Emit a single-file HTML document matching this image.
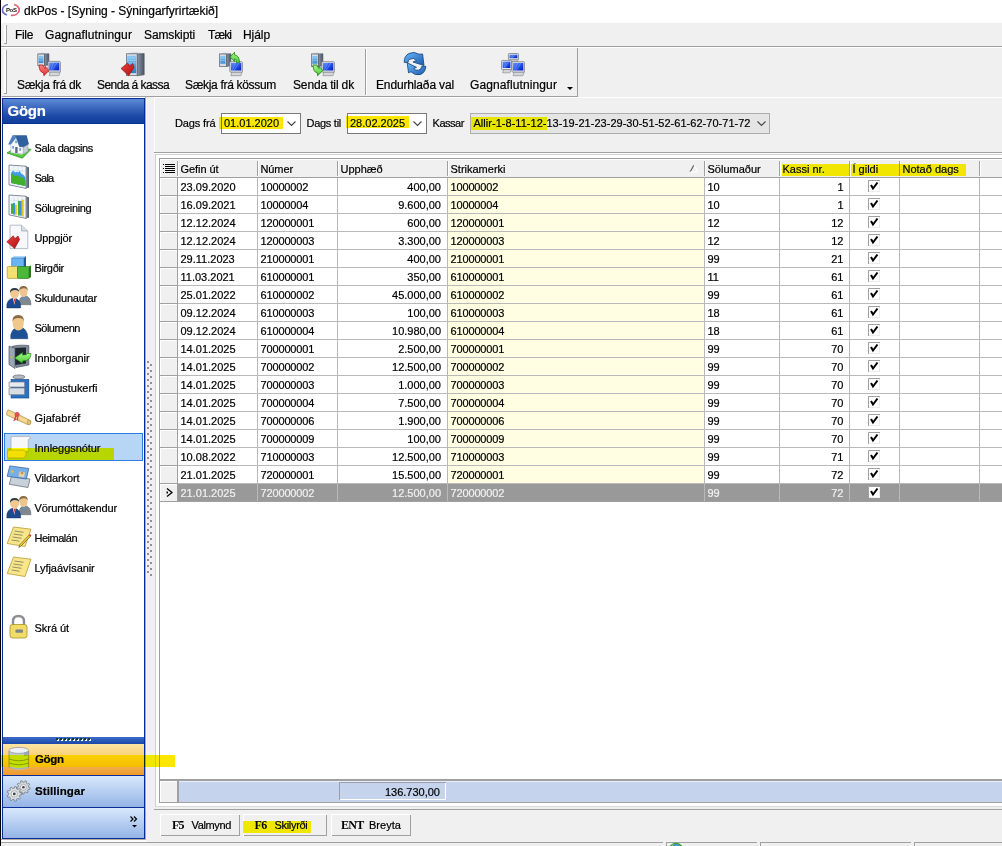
<!DOCTYPE html>
<html><head><meta charset="utf-8"><title>dkPos</title>
<style>
html,body{margin:0;padding:0;}
body{width:1002px;height:846px;position:relative;overflow:hidden;background:#f0f0f0;font-family:"Liberation Sans", sans-serif;}
body>div,body>svg{position:absolute;}
.t{white-space:pre;line-height:1;-webkit-text-stroke:0.2px currentColor;}
</style></head><body>
<div style="left:0px;top:0px;width:1002px;height:23px;background:#fff"></div>
<div style="left:0px;top:0px;width:1px;height:846px;background:#000"></div>
<div style="left:1px;top:23px;width:1001px;height:23px;background:#f0f0f0"></div>
<div style="left:4px;top:25px;width:2px;height:18px;background:#fff"></div>
<div style="left:6px;top:25px;width:1px;height:19px;background:#a0a0a0"></div>
<div style="left:4px;top:43px;width:3px;height:1px;background:#a0a0a0"></div>
<div style="left:1px;top:46px;width:1001px;height:1px;background:#a0a0a0"></div>
<div style="left:1px;top:47px;width:1001px;height:1px;background:#fff"></div>
<div style="left:1px;top:48px;width:1001px;height:49px;background:#f0f0f0"></div>
<div style="left:2px;top:96px;width:576px;height:1px;background:#a0a0a0"></div>
<div style="left:577px;top:48px;width:1px;height:49px;background:#a0a0a0"></div>
<div style="left:1px;top:97px;width:144px;height:1px;background:#fff"></div>
<div style="left:154px;top:97px;width:848px;height:1px;background:#fff"></div>
<div style="left:4px;top:50px;width:2px;height:43px;background:#fff"></div>
<div style="left:6px;top:50px;width:1px;height:44px;background:#a0a0a0"></div>
<div style="left:4px;top:93px;width:3px;height:1px;background:#a0a0a0"></div>
<div style="left:365px;top:49px;width:1px;height:46px;background:#a0a0a0"></div>
<div style="left:366px;top:49px;width:1px;height:46px;background:#fff"></div>
<div style="left:2px;top:98px;width:143px;height:741px;background:#0a2c96"></div>
<div style="left:3px;top:99px;width:141px;height:24px;background:linear-gradient(#5d8ad6,#1d4aa6 70%,#0f3d9c)"></div>
<div style="left:3px;top:123px;width:141px;height:1px;background:#073090"></div>
<div style="left:3px;top:124px;width:141px;height:613px;background:#fff"></div>
<div style="left:145px;top:96px;width:1px;height:743px;background:#aca89c"></div>
<div style="left:146px;top:98px;width:1px;height:741px;background:#f8f8f8"></div>
<div style="left:4px;top:433px;width:139px;height:28px;background:#b7d6f6;box-shadow:inset 0 0 0 1px #2a7fe0"></div>
<div style="left:3px;top:737px;width:141px;height:7px;background:linear-gradient(#3a6cc8,#1a48a8)"></div>
<div style="left:57px;top:739px;width:2px;height:2px;background:#fff"></div>
<div style="left:56px;top:738px;width:2px;height:2px;background:#1a3a2a"></div>
<div style="left:61px;top:739px;width:2px;height:2px;background:#fff"></div>
<div style="left:60px;top:738px;width:2px;height:2px;background:#1a3a2a"></div>
<div style="left:65px;top:739px;width:2px;height:2px;background:#fff"></div>
<div style="left:64px;top:738px;width:2px;height:2px;background:#1a3a2a"></div>
<div style="left:69px;top:739px;width:2px;height:2px;background:#fff"></div>
<div style="left:68px;top:738px;width:2px;height:2px;background:#1a3a2a"></div>
<div style="left:73px;top:739px;width:2px;height:2px;background:#fff"></div>
<div style="left:72px;top:738px;width:2px;height:2px;background:#1a3a2a"></div>
<div style="left:77px;top:739px;width:2px;height:2px;background:#fff"></div>
<div style="left:76px;top:738px;width:2px;height:2px;background:#1a3a2a"></div>
<div style="left:81px;top:739px;width:2px;height:2px;background:#fff"></div>
<div style="left:80px;top:738px;width:2px;height:2px;background:#1a3a2a"></div>
<div style="left:85px;top:739px;width:2px;height:2px;background:#fff"></div>
<div style="left:84px;top:738px;width:2px;height:2px;background:#1a3a2a"></div>
<div style="left:89px;top:739px;width:2px;height:2px;background:#fff"></div>
<div style="left:88px;top:738px;width:2px;height:2px;background:#1a3a2a"></div>
<div style="left:3px;top:744px;width:141px;height:31px;background:linear-gradient(#fde6a4,#f9d27a 35%,#f8d040 36%,#f4bc30 74%,#f0ac48 75%,#ef9a2c)"></div>
<div style="left:3px;top:775px;width:141px;height:1px;background:#0a2c96"></div>
<div style="left:3px;top:776px;width:141px;height:31px;background:linear-gradient(#d8e8fc,#94b4e6)"></div>
<div style="left:3px;top:807px;width:141px;height:1px;background:#0a2c96"></div>
<div style="left:3px;top:808px;width:141px;height:30px;background:linear-gradient(#d8e8fc,#94b4e6)"></div>
<div style="left:1px;top:839px;width:145px;height:1px;background:#b4ac9c"></div>
<div style="left:1px;top:840px;width:145px;height:2px;background:#fafafa"></div>
<div style="left:154px;top:98px;width:1px;height:54px;background:#fff"></div>
<div style="left:154px;top:152px;width:848px;height:1px;background:#a0a0a0"></div>
<div style="left:155px;top:153px;width:847px;height:1px;background:#fff"></div>
<div style="left:221px;top:113px;width:80px;height:21px;background:#fff;box-shadow:inset 0 0 0 1px #7a7a7a"></div>
<div style="left:347px;top:113px;width:80px;height:21px;background:#fff;box-shadow:inset 0 0 0 1px #7a7a7a"></div>
<div style="left:470px;top:113px;width:300px;height:21px;background:#e5e5e5;box-shadow:inset 0 0 0 1px #adadad"></div>
<div style="left:155px;top:154px;width:847px;height:1px;#d8d8d8"></div>
<div style="left:155px;top:154px;width:847px;height:652px;background:#fff;box-shadow:inset 1px 1px 0 #d0d0d0"></div>
<div style="left:159px;top:158px;width:843px;height:644px;background:#fff;box-shadow:inset 1px 1px 0 #a0a0a0"></div>
<div style="left:161px;top:160px;width:841px;height:17px;background:#f0f0f0"></div>
<div style="left:160px;top:177px;width:842px;height:1px;background:#a0a0a0"></div>
<div style="left:177px;top:161px;width:1px;height:15px;background:#a0a0a0"></div>
<div style="left:178px;top:161px;width:1px;height:15px;background:#fff"></div>
<div style="left:257px;top:161px;width:1px;height:15px;background:#a0a0a0"></div>
<div style="left:258px;top:161px;width:1px;height:15px;background:#fff"></div>
<div style="left:337px;top:161px;width:1px;height:15px;background:#a0a0a0"></div>
<div style="left:338px;top:161px;width:1px;height:15px;background:#fff"></div>
<div style="left:447px;top:161px;width:1px;height:15px;background:#a0a0a0"></div>
<div style="left:448px;top:161px;width:1px;height:15px;background:#fff"></div>
<div style="left:704px;top:161px;width:1px;height:15px;background:#a0a0a0"></div>
<div style="left:705px;top:161px;width:1px;height:15px;background:#fff"></div>
<div style="left:779px;top:161px;width:1px;height:15px;background:#a0a0a0"></div>
<div style="left:780px;top:161px;width:1px;height:15px;background:#fff"></div>
<div style="left:849px;top:161px;width:1px;height:15px;background:#a0a0a0"></div>
<div style="left:850px;top:161px;width:1px;height:15px;background:#fff"></div>
<div style="left:899px;top:161px;width:1px;height:15px;background:#a0a0a0"></div>
<div style="left:900px;top:161px;width:1px;height:15px;background:#fff"></div>
<div style="left:979px;top:161px;width:1px;height:15px;background:#a0a0a0"></div>
<div style="left:980px;top:161px;width:1px;height:15px;background:#fff"></div>
<div style="left:165px;top:164px;width:10px;height:1px;background:#000"></div>
<div style="left:165px;top:166px;width:10px;height:1px;background:#000"></div>
<div style="left:165px;top:168px;width:10px;height:1px;background:#000"></div>
<div style="left:165px;top:170px;width:10px;height:1px;background:#000"></div>
<div style="left:165px;top:172px;width:10px;height:1px;background:#000"></div>
<div style="left:163px;top:164px;width:1px;height:1px;background:#000"></div>
<div style="left:163px;top:168px;width:1px;height:1px;background:#000"></div>
<div style="left:163px;top:172px;width:1px;height:1px;background:#000"></div>
<div style="left:160px;top:178px;width:17px;height:17px;background:#f0f0f0;box-shadow:inset 1px 1px 0 #fff"></div>
<div style="left:177px;top:178px;width:1px;height:17px;background:#a0a0a0"></div>
<div style="left:448px;top:178px;width:256px;height:17px;background:#fffee2"></div>
<div style="left:160px;top:195px;width:842px;height:1px;background:#b9b9b9"></div>
<div style="left:160px;top:195px;width:18px;height:1px;background:#a0a0a0"></div>
<div style="left:257px;top:178px;width:1px;height:17px;background:#b9b9b9"></div>
<div style="left:337px;top:178px;width:1px;height:17px;background:#b9b9b9"></div>
<div style="left:447px;top:178px;width:1px;height:17px;background:#b9b9b9"></div>
<div style="left:704px;top:178px;width:1px;height:17px;background:#b9b9b9"></div>
<div style="left:779px;top:178px;width:1px;height:17px;background:#b9b9b9"></div>
<div style="left:849px;top:178px;width:1px;height:17px;background:#b9b9b9"></div>
<div style="left:899px;top:178px;width:1px;height:17px;background:#b9b9b9"></div>
<div style="left:979px;top:178px;width:1px;height:17px;background:#b9b9b9"></div>
<div style="left:160px;top:196px;width:17px;height:17px;background:#f0f0f0;box-shadow:inset 1px 1px 0 #fff"></div>
<div style="left:177px;top:196px;width:1px;height:17px;background:#a0a0a0"></div>
<div style="left:448px;top:196px;width:256px;height:17px;background:#fffee2"></div>
<div style="left:160px;top:213px;width:842px;height:1px;background:#b9b9b9"></div>
<div style="left:160px;top:213px;width:18px;height:1px;background:#a0a0a0"></div>
<div style="left:257px;top:196px;width:1px;height:17px;background:#b9b9b9"></div>
<div style="left:337px;top:196px;width:1px;height:17px;background:#b9b9b9"></div>
<div style="left:447px;top:196px;width:1px;height:17px;background:#b9b9b9"></div>
<div style="left:704px;top:196px;width:1px;height:17px;background:#b9b9b9"></div>
<div style="left:779px;top:196px;width:1px;height:17px;background:#b9b9b9"></div>
<div style="left:849px;top:196px;width:1px;height:17px;background:#b9b9b9"></div>
<div style="left:899px;top:196px;width:1px;height:17px;background:#b9b9b9"></div>
<div style="left:979px;top:196px;width:1px;height:17px;background:#b9b9b9"></div>
<div style="left:160px;top:214px;width:17px;height:17px;background:#f0f0f0;box-shadow:inset 1px 1px 0 #fff"></div>
<div style="left:177px;top:214px;width:1px;height:17px;background:#a0a0a0"></div>
<div style="left:448px;top:214px;width:256px;height:17px;background:#fffee2"></div>
<div style="left:160px;top:231px;width:842px;height:1px;background:#b9b9b9"></div>
<div style="left:160px;top:231px;width:18px;height:1px;background:#a0a0a0"></div>
<div style="left:257px;top:214px;width:1px;height:17px;background:#b9b9b9"></div>
<div style="left:337px;top:214px;width:1px;height:17px;background:#b9b9b9"></div>
<div style="left:447px;top:214px;width:1px;height:17px;background:#b9b9b9"></div>
<div style="left:704px;top:214px;width:1px;height:17px;background:#b9b9b9"></div>
<div style="left:779px;top:214px;width:1px;height:17px;background:#b9b9b9"></div>
<div style="left:849px;top:214px;width:1px;height:17px;background:#b9b9b9"></div>
<div style="left:899px;top:214px;width:1px;height:17px;background:#b9b9b9"></div>
<div style="left:979px;top:214px;width:1px;height:17px;background:#b9b9b9"></div>
<div style="left:160px;top:232px;width:17px;height:17px;background:#f0f0f0;box-shadow:inset 1px 1px 0 #fff"></div>
<div style="left:177px;top:232px;width:1px;height:17px;background:#a0a0a0"></div>
<div style="left:448px;top:232px;width:256px;height:17px;background:#fffee2"></div>
<div style="left:160px;top:249px;width:842px;height:1px;background:#b9b9b9"></div>
<div style="left:160px;top:249px;width:18px;height:1px;background:#a0a0a0"></div>
<div style="left:257px;top:232px;width:1px;height:17px;background:#b9b9b9"></div>
<div style="left:337px;top:232px;width:1px;height:17px;background:#b9b9b9"></div>
<div style="left:447px;top:232px;width:1px;height:17px;background:#b9b9b9"></div>
<div style="left:704px;top:232px;width:1px;height:17px;background:#b9b9b9"></div>
<div style="left:779px;top:232px;width:1px;height:17px;background:#b9b9b9"></div>
<div style="left:849px;top:232px;width:1px;height:17px;background:#b9b9b9"></div>
<div style="left:899px;top:232px;width:1px;height:17px;background:#b9b9b9"></div>
<div style="left:979px;top:232px;width:1px;height:17px;background:#b9b9b9"></div>
<div style="left:160px;top:250px;width:17px;height:17px;background:#f0f0f0;box-shadow:inset 1px 1px 0 #fff"></div>
<div style="left:177px;top:250px;width:1px;height:17px;background:#a0a0a0"></div>
<div style="left:448px;top:250px;width:256px;height:17px;background:#fffee2"></div>
<div style="left:160px;top:267px;width:842px;height:1px;background:#b9b9b9"></div>
<div style="left:160px;top:267px;width:18px;height:1px;background:#a0a0a0"></div>
<div style="left:257px;top:250px;width:1px;height:17px;background:#b9b9b9"></div>
<div style="left:337px;top:250px;width:1px;height:17px;background:#b9b9b9"></div>
<div style="left:447px;top:250px;width:1px;height:17px;background:#b9b9b9"></div>
<div style="left:704px;top:250px;width:1px;height:17px;background:#b9b9b9"></div>
<div style="left:779px;top:250px;width:1px;height:17px;background:#b9b9b9"></div>
<div style="left:849px;top:250px;width:1px;height:17px;background:#b9b9b9"></div>
<div style="left:899px;top:250px;width:1px;height:17px;background:#b9b9b9"></div>
<div style="left:979px;top:250px;width:1px;height:17px;background:#b9b9b9"></div>
<div style="left:160px;top:268px;width:17px;height:17px;background:#f0f0f0;box-shadow:inset 1px 1px 0 #fff"></div>
<div style="left:177px;top:268px;width:1px;height:17px;background:#a0a0a0"></div>
<div style="left:448px;top:268px;width:256px;height:17px;background:#fffee2"></div>
<div style="left:160px;top:285px;width:842px;height:1px;background:#b9b9b9"></div>
<div style="left:160px;top:285px;width:18px;height:1px;background:#a0a0a0"></div>
<div style="left:257px;top:268px;width:1px;height:17px;background:#b9b9b9"></div>
<div style="left:337px;top:268px;width:1px;height:17px;background:#b9b9b9"></div>
<div style="left:447px;top:268px;width:1px;height:17px;background:#b9b9b9"></div>
<div style="left:704px;top:268px;width:1px;height:17px;background:#b9b9b9"></div>
<div style="left:779px;top:268px;width:1px;height:17px;background:#b9b9b9"></div>
<div style="left:849px;top:268px;width:1px;height:17px;background:#b9b9b9"></div>
<div style="left:899px;top:268px;width:1px;height:17px;background:#b9b9b9"></div>
<div style="left:979px;top:268px;width:1px;height:17px;background:#b9b9b9"></div>
<div style="left:160px;top:286px;width:17px;height:17px;background:#f0f0f0;box-shadow:inset 1px 1px 0 #fff"></div>
<div style="left:177px;top:286px;width:1px;height:17px;background:#a0a0a0"></div>
<div style="left:448px;top:286px;width:256px;height:17px;background:#fffee2"></div>
<div style="left:160px;top:303px;width:842px;height:1px;background:#b9b9b9"></div>
<div style="left:160px;top:303px;width:18px;height:1px;background:#a0a0a0"></div>
<div style="left:257px;top:286px;width:1px;height:17px;background:#b9b9b9"></div>
<div style="left:337px;top:286px;width:1px;height:17px;background:#b9b9b9"></div>
<div style="left:447px;top:286px;width:1px;height:17px;background:#b9b9b9"></div>
<div style="left:704px;top:286px;width:1px;height:17px;background:#b9b9b9"></div>
<div style="left:779px;top:286px;width:1px;height:17px;background:#b9b9b9"></div>
<div style="left:849px;top:286px;width:1px;height:17px;background:#b9b9b9"></div>
<div style="left:899px;top:286px;width:1px;height:17px;background:#b9b9b9"></div>
<div style="left:979px;top:286px;width:1px;height:17px;background:#b9b9b9"></div>
<div style="left:160px;top:304px;width:17px;height:17px;background:#f0f0f0;box-shadow:inset 1px 1px 0 #fff"></div>
<div style="left:177px;top:304px;width:1px;height:17px;background:#a0a0a0"></div>
<div style="left:448px;top:304px;width:256px;height:17px;background:#fffee2"></div>
<div style="left:160px;top:321px;width:842px;height:1px;background:#b9b9b9"></div>
<div style="left:160px;top:321px;width:18px;height:1px;background:#a0a0a0"></div>
<div style="left:257px;top:304px;width:1px;height:17px;background:#b9b9b9"></div>
<div style="left:337px;top:304px;width:1px;height:17px;background:#b9b9b9"></div>
<div style="left:447px;top:304px;width:1px;height:17px;background:#b9b9b9"></div>
<div style="left:704px;top:304px;width:1px;height:17px;background:#b9b9b9"></div>
<div style="left:779px;top:304px;width:1px;height:17px;background:#b9b9b9"></div>
<div style="left:849px;top:304px;width:1px;height:17px;background:#b9b9b9"></div>
<div style="left:899px;top:304px;width:1px;height:17px;background:#b9b9b9"></div>
<div style="left:979px;top:304px;width:1px;height:17px;background:#b9b9b9"></div>
<div style="left:160px;top:322px;width:17px;height:17px;background:#f0f0f0;box-shadow:inset 1px 1px 0 #fff"></div>
<div style="left:177px;top:322px;width:1px;height:17px;background:#a0a0a0"></div>
<div style="left:448px;top:322px;width:256px;height:17px;background:#fffee2"></div>
<div style="left:160px;top:339px;width:842px;height:1px;background:#b9b9b9"></div>
<div style="left:160px;top:339px;width:18px;height:1px;background:#a0a0a0"></div>
<div style="left:257px;top:322px;width:1px;height:17px;background:#b9b9b9"></div>
<div style="left:337px;top:322px;width:1px;height:17px;background:#b9b9b9"></div>
<div style="left:447px;top:322px;width:1px;height:17px;background:#b9b9b9"></div>
<div style="left:704px;top:322px;width:1px;height:17px;background:#b9b9b9"></div>
<div style="left:779px;top:322px;width:1px;height:17px;background:#b9b9b9"></div>
<div style="left:849px;top:322px;width:1px;height:17px;background:#b9b9b9"></div>
<div style="left:899px;top:322px;width:1px;height:17px;background:#b9b9b9"></div>
<div style="left:979px;top:322px;width:1px;height:17px;background:#b9b9b9"></div>
<div style="left:160px;top:340px;width:17px;height:17px;background:#f0f0f0;box-shadow:inset 1px 1px 0 #fff"></div>
<div style="left:177px;top:340px;width:1px;height:17px;background:#a0a0a0"></div>
<div style="left:448px;top:340px;width:256px;height:17px;background:#fffee2"></div>
<div style="left:160px;top:357px;width:842px;height:1px;background:#b9b9b9"></div>
<div style="left:160px;top:357px;width:18px;height:1px;background:#a0a0a0"></div>
<div style="left:257px;top:340px;width:1px;height:17px;background:#b9b9b9"></div>
<div style="left:337px;top:340px;width:1px;height:17px;background:#b9b9b9"></div>
<div style="left:447px;top:340px;width:1px;height:17px;background:#b9b9b9"></div>
<div style="left:704px;top:340px;width:1px;height:17px;background:#b9b9b9"></div>
<div style="left:779px;top:340px;width:1px;height:17px;background:#b9b9b9"></div>
<div style="left:849px;top:340px;width:1px;height:17px;background:#b9b9b9"></div>
<div style="left:899px;top:340px;width:1px;height:17px;background:#b9b9b9"></div>
<div style="left:979px;top:340px;width:1px;height:17px;background:#b9b9b9"></div>
<div style="left:160px;top:358px;width:17px;height:17px;background:#f0f0f0;box-shadow:inset 1px 1px 0 #fff"></div>
<div style="left:177px;top:358px;width:1px;height:17px;background:#a0a0a0"></div>
<div style="left:448px;top:358px;width:256px;height:17px;background:#fffee2"></div>
<div style="left:160px;top:375px;width:842px;height:1px;background:#b9b9b9"></div>
<div style="left:160px;top:375px;width:18px;height:1px;background:#a0a0a0"></div>
<div style="left:257px;top:358px;width:1px;height:17px;background:#b9b9b9"></div>
<div style="left:337px;top:358px;width:1px;height:17px;background:#b9b9b9"></div>
<div style="left:447px;top:358px;width:1px;height:17px;background:#b9b9b9"></div>
<div style="left:704px;top:358px;width:1px;height:17px;background:#b9b9b9"></div>
<div style="left:779px;top:358px;width:1px;height:17px;background:#b9b9b9"></div>
<div style="left:849px;top:358px;width:1px;height:17px;background:#b9b9b9"></div>
<div style="left:899px;top:358px;width:1px;height:17px;background:#b9b9b9"></div>
<div style="left:979px;top:358px;width:1px;height:17px;background:#b9b9b9"></div>
<div style="left:160px;top:376px;width:17px;height:17px;background:#f0f0f0;box-shadow:inset 1px 1px 0 #fff"></div>
<div style="left:177px;top:376px;width:1px;height:17px;background:#a0a0a0"></div>
<div style="left:448px;top:376px;width:256px;height:17px;background:#fffee2"></div>
<div style="left:160px;top:393px;width:842px;height:1px;background:#b9b9b9"></div>
<div style="left:160px;top:393px;width:18px;height:1px;background:#a0a0a0"></div>
<div style="left:257px;top:376px;width:1px;height:17px;background:#b9b9b9"></div>
<div style="left:337px;top:376px;width:1px;height:17px;background:#b9b9b9"></div>
<div style="left:447px;top:376px;width:1px;height:17px;background:#b9b9b9"></div>
<div style="left:704px;top:376px;width:1px;height:17px;background:#b9b9b9"></div>
<div style="left:779px;top:376px;width:1px;height:17px;background:#b9b9b9"></div>
<div style="left:849px;top:376px;width:1px;height:17px;background:#b9b9b9"></div>
<div style="left:899px;top:376px;width:1px;height:17px;background:#b9b9b9"></div>
<div style="left:979px;top:376px;width:1px;height:17px;background:#b9b9b9"></div>
<div style="left:160px;top:394px;width:17px;height:17px;background:#f0f0f0;box-shadow:inset 1px 1px 0 #fff"></div>
<div style="left:177px;top:394px;width:1px;height:17px;background:#a0a0a0"></div>
<div style="left:448px;top:394px;width:256px;height:17px;background:#fffee2"></div>
<div style="left:160px;top:411px;width:842px;height:1px;background:#b9b9b9"></div>
<div style="left:160px;top:411px;width:18px;height:1px;background:#a0a0a0"></div>
<div style="left:257px;top:394px;width:1px;height:17px;background:#b9b9b9"></div>
<div style="left:337px;top:394px;width:1px;height:17px;background:#b9b9b9"></div>
<div style="left:447px;top:394px;width:1px;height:17px;background:#b9b9b9"></div>
<div style="left:704px;top:394px;width:1px;height:17px;background:#b9b9b9"></div>
<div style="left:779px;top:394px;width:1px;height:17px;background:#b9b9b9"></div>
<div style="left:849px;top:394px;width:1px;height:17px;background:#b9b9b9"></div>
<div style="left:899px;top:394px;width:1px;height:17px;background:#b9b9b9"></div>
<div style="left:979px;top:394px;width:1px;height:17px;background:#b9b9b9"></div>
<div style="left:160px;top:412px;width:17px;height:17px;background:#f0f0f0;box-shadow:inset 1px 1px 0 #fff"></div>
<div style="left:177px;top:412px;width:1px;height:17px;background:#a0a0a0"></div>
<div style="left:448px;top:412px;width:256px;height:17px;background:#fffee2"></div>
<div style="left:160px;top:429px;width:842px;height:1px;background:#b9b9b9"></div>
<div style="left:160px;top:429px;width:18px;height:1px;background:#a0a0a0"></div>
<div style="left:257px;top:412px;width:1px;height:17px;background:#b9b9b9"></div>
<div style="left:337px;top:412px;width:1px;height:17px;background:#b9b9b9"></div>
<div style="left:447px;top:412px;width:1px;height:17px;background:#b9b9b9"></div>
<div style="left:704px;top:412px;width:1px;height:17px;background:#b9b9b9"></div>
<div style="left:779px;top:412px;width:1px;height:17px;background:#b9b9b9"></div>
<div style="left:849px;top:412px;width:1px;height:17px;background:#b9b9b9"></div>
<div style="left:899px;top:412px;width:1px;height:17px;background:#b9b9b9"></div>
<div style="left:979px;top:412px;width:1px;height:17px;background:#b9b9b9"></div>
<div style="left:160px;top:430px;width:17px;height:17px;background:#f0f0f0;box-shadow:inset 1px 1px 0 #fff"></div>
<div style="left:177px;top:430px;width:1px;height:17px;background:#a0a0a0"></div>
<div style="left:448px;top:430px;width:256px;height:17px;background:#fffee2"></div>
<div style="left:160px;top:447px;width:842px;height:1px;background:#b9b9b9"></div>
<div style="left:160px;top:447px;width:18px;height:1px;background:#a0a0a0"></div>
<div style="left:257px;top:430px;width:1px;height:17px;background:#b9b9b9"></div>
<div style="left:337px;top:430px;width:1px;height:17px;background:#b9b9b9"></div>
<div style="left:447px;top:430px;width:1px;height:17px;background:#b9b9b9"></div>
<div style="left:704px;top:430px;width:1px;height:17px;background:#b9b9b9"></div>
<div style="left:779px;top:430px;width:1px;height:17px;background:#b9b9b9"></div>
<div style="left:849px;top:430px;width:1px;height:17px;background:#b9b9b9"></div>
<div style="left:899px;top:430px;width:1px;height:17px;background:#b9b9b9"></div>
<div style="left:979px;top:430px;width:1px;height:17px;background:#b9b9b9"></div>
<div style="left:160px;top:448px;width:17px;height:17px;background:#f0f0f0;box-shadow:inset 1px 1px 0 #fff"></div>
<div style="left:177px;top:448px;width:1px;height:17px;background:#a0a0a0"></div>
<div style="left:448px;top:448px;width:256px;height:17px;background:#fffee2"></div>
<div style="left:160px;top:465px;width:842px;height:1px;background:#b9b9b9"></div>
<div style="left:160px;top:465px;width:18px;height:1px;background:#a0a0a0"></div>
<div style="left:257px;top:448px;width:1px;height:17px;background:#b9b9b9"></div>
<div style="left:337px;top:448px;width:1px;height:17px;background:#b9b9b9"></div>
<div style="left:447px;top:448px;width:1px;height:17px;background:#b9b9b9"></div>
<div style="left:704px;top:448px;width:1px;height:17px;background:#b9b9b9"></div>
<div style="left:779px;top:448px;width:1px;height:17px;background:#b9b9b9"></div>
<div style="left:849px;top:448px;width:1px;height:17px;background:#b9b9b9"></div>
<div style="left:899px;top:448px;width:1px;height:17px;background:#b9b9b9"></div>
<div style="left:979px;top:448px;width:1px;height:17px;background:#b9b9b9"></div>
<div style="left:160px;top:466px;width:17px;height:17px;background:#f0f0f0;box-shadow:inset 1px 1px 0 #fff"></div>
<div style="left:177px;top:466px;width:1px;height:17px;background:#a0a0a0"></div>
<div style="left:448px;top:466px;width:256px;height:17px;background:#fffee2"></div>
<div style="left:160px;top:483px;width:842px;height:1px;background:#b9b9b9"></div>
<div style="left:160px;top:483px;width:18px;height:1px;background:#a0a0a0"></div>
<div style="left:257px;top:466px;width:1px;height:17px;background:#b9b9b9"></div>
<div style="left:337px;top:466px;width:1px;height:17px;background:#b9b9b9"></div>
<div style="left:447px;top:466px;width:1px;height:17px;background:#b9b9b9"></div>
<div style="left:704px;top:466px;width:1px;height:17px;background:#b9b9b9"></div>
<div style="left:779px;top:466px;width:1px;height:17px;background:#b9b9b9"></div>
<div style="left:849px;top:466px;width:1px;height:17px;background:#b9b9b9"></div>
<div style="left:899px;top:466px;width:1px;height:17px;background:#b9b9b9"></div>
<div style="left:979px;top:466px;width:1px;height:17px;background:#b9b9b9"></div>
<div style="left:160px;top:484px;width:17px;height:17px;background:#f0f0f0;box-shadow:inset 1px 1px 0 #fff"></div>
<div style="left:177px;top:484px;width:1px;height:17px;background:#a0a0a0"></div>
<div style="left:178px;top:484px;width:824px;height:17px;background:#999999"></div>
<div style="left:160px;top:501px;width:842px;height:1px;background:#a0a0a0"></div>
<div style="left:160px;top:501px;width:18px;height:1px;background:#a0a0a0"></div>
<div style="left:257px;top:484px;width:1px;height:17px;background:#b9b9b9"></div>
<div style="left:337px;top:484px;width:1px;height:17px;background:#b9b9b9"></div>
<div style="left:447px;top:484px;width:1px;height:17px;background:#b9b9b9"></div>
<div style="left:704px;top:484px;width:1px;height:17px;background:#b9b9b9"></div>
<div style="left:779px;top:484px;width:1px;height:17px;background:#b9b9b9"></div>
<div style="left:849px;top:484px;width:1px;height:17px;background:#b9b9b9"></div>
<div style="left:899px;top:484px;width:1px;height:17px;background:#b9b9b9"></div>
<div style="left:979px;top:484px;width:1px;height:17px;background:#b9b9b9"></div>
<div style="left:160px;top:779px;width:842px;height:2px;background:#a0a0a0"></div>
<div style="left:160px;top:781px;width:842px;height:21px;background:#c5d3ed;box-shadow:inset 0 1px 0 #e8eefa"></div>
<div style="left:160px;top:781px;width:17px;height:21px;background:#f0f0f0;box-shadow:inset 1px 1px 0 #fff"></div>
<div style="left:177px;top:781px;width:2px;height:21px;background:#a0a0a0"></div>
<div style="left:339px;top:782px;width:107px;height:18px;background:#c5d3ed;box-shadow:inset 1px 1px 0 #9aa0aa, inset -1px -1px 0 #fff"></div>
<div style="left:159px;top:802px;width:843px;height:1px;background:#a0a0a0"></div>
<div style="left:155px;top:806px;width:847px;height:1px;background:#d8d8d8"></div>
<div style="left:154px;top:809px;width:848px;height:1px;background:#a0a0a0"></div>
<div style="left:146px;top:810px;width:856px;height:36px;background:#f0f0f0"></div>
<div style="left:160px;top:814px;width:80px;height:22px;background:#f0f0f0;box-shadow:inset 1px 1px 0 #fff, inset -1px -1px 0 #a0a0a0"></div>
<div style="left:243px;top:814px;width:84px;height:22px;background:#f0f0f0;box-shadow:inset 1px 1px 0 #fff, inset -1px -1px 0 #a0a0a0"></div>
<div style="left:331px;top:814px;width:80px;height:22px;background:#f0f0f0;box-shadow:inset 1px 1px 0 #fff, inset -1px -1px 0 #a0a0a0"></div>
<div style="left:1px;top:842px;width:662px;height:1px;background:#a0a0a0"></div>
<div style="left:666px;top:842px;width:91px;height:1px;background:#a0a0a0"></div>
<div style="left:666px;top:842px;width:1px;height:4px;background:#a0a0a0"></div>
<div style="left:760px;top:842px;width:151px;height:1px;background:#a0a0a0"></div>
<div style="left:760px;top:842px;width:1px;height:4px;background:#a0a0a0"></div>
<div style="left:914px;top:842px;width:88px;height:1px;background:#a0a0a0"></div>
<div style="left:914px;top:842px;width:1px;height:4px;background:#a0a0a0"></div>
<div style="left:147px;top:361px;width:2px;height:2px;background:#909090"></div>
<div style="left:150px;top:364px;width:2px;height:2px;background:#909090"></div>
<div style="left:147px;top:367px;width:2px;height:2px;background:#909090"></div>
<div style="left:150px;top:370px;width:2px;height:2px;background:#909090"></div>
<div style="left:147px;top:373px;width:2px;height:2px;background:#909090"></div>
<div style="left:150px;top:376px;width:2px;height:2px;background:#909090"></div>
<div style="left:147px;top:379px;width:2px;height:2px;background:#909090"></div>
<div style="left:150px;top:382px;width:2px;height:2px;background:#909090"></div>
<div style="left:147px;top:385px;width:2px;height:2px;background:#909090"></div>
<div style="left:150px;top:388px;width:2px;height:2px;background:#909090"></div>
<div style="left:147px;top:391px;width:2px;height:2px;background:#909090"></div>
<div style="left:150px;top:394px;width:2px;height:2px;background:#909090"></div>
<div style="left:147px;top:397px;width:2px;height:2px;background:#909090"></div>
<div style="left:150px;top:400px;width:2px;height:2px;background:#909090"></div>
<div style="left:147px;top:403px;width:2px;height:2px;background:#909090"></div>
<div style="left:150px;top:406px;width:2px;height:2px;background:#909090"></div>
<div style="left:147px;top:409px;width:2px;height:2px;background:#909090"></div>
<div style="left:150px;top:412px;width:2px;height:2px;background:#909090"></div>
<div style="left:147px;top:415px;width:2px;height:2px;background:#909090"></div>
<div style="left:150px;top:418px;width:2px;height:2px;background:#909090"></div>
<div style="left:147px;top:421px;width:2px;height:2px;background:#909090"></div>
<div style="left:150px;top:424px;width:2px;height:2px;background:#909090"></div>
<div style="left:147px;top:427px;width:2px;height:2px;background:#909090"></div>
<div style="left:150px;top:430px;width:2px;height:2px;background:#909090"></div>
<div style="left:147px;top:433px;width:2px;height:2px;background:#909090"></div>
<div style="left:150px;top:436px;width:2px;height:2px;background:#909090"></div>
<div style="left:147px;top:439px;width:2px;height:2px;background:#909090"></div>
<div style="left:150px;top:442px;width:2px;height:2px;background:#909090"></div>
<div style="left:147px;top:445px;width:2px;height:2px;background:#909090"></div>
<div style="left:150px;top:448px;width:2px;height:2px;background:#909090"></div>
<div style="left:147px;top:451px;width:2px;height:2px;background:#909090"></div>
<div style="left:150px;top:454px;width:2px;height:2px;background:#909090"></div>
<div style="left:147px;top:457px;width:2px;height:2px;background:#909090"></div>
<div style="left:150px;top:460px;width:2px;height:2px;background:#909090"></div>
<div style="left:147px;top:463px;width:2px;height:2px;background:#909090"></div>
<div style="left:150px;top:466px;width:2px;height:2px;background:#909090"></div>
<div style="left:147px;top:469px;width:2px;height:2px;background:#909090"></div>
<div style="left:150px;top:472px;width:2px;height:2px;background:#909090"></div>
<div style="left:147px;top:475px;width:2px;height:2px;background:#909090"></div>
<div style="left:150px;top:478px;width:2px;height:2px;background:#909090"></div>
<div style="left:147px;top:481px;width:2px;height:2px;background:#909090"></div>
<div style="left:150px;top:484px;width:2px;height:2px;background:#909090"></div>
<div style="left:147px;top:487px;width:2px;height:2px;background:#909090"></div>
<div style="left:150px;top:490px;width:2px;height:2px;background:#909090"></div>
<div style="left:147px;top:493px;width:2px;height:2px;background:#909090"></div>
<div style="left:150px;top:496px;width:2px;height:2px;background:#909090"></div>
<div style="left:147px;top:499px;width:2px;height:2px;background:#909090"></div>
<div style="left:150px;top:502px;width:2px;height:2px;background:#909090"></div>
<div style="left:147px;top:505px;width:2px;height:2px;background:#909090"></div>
<div style="left:150px;top:508px;width:2px;height:2px;background:#909090"></div>
<div style="left:147px;top:511px;width:2px;height:2px;background:#909090"></div>
<div style="left:150px;top:514px;width:2px;height:2px;background:#909090"></div>
<div style="left:147px;top:517px;width:2px;height:2px;background:#909090"></div>
<div style="left:150px;top:520px;width:2px;height:2px;background:#909090"></div>
<div style="left:147px;top:523px;width:2px;height:2px;background:#909090"></div>
<div style="left:150px;top:526px;width:2px;height:2px;background:#909090"></div>
<div style="left:147px;top:529px;width:2px;height:2px;background:#909090"></div>
<div style="left:150px;top:532px;width:2px;height:2px;background:#909090"></div>
<div style="left:147px;top:535px;width:2px;height:2px;background:#909090"></div>
<div style="left:150px;top:538px;width:2px;height:2px;background:#909090"></div>
<div style="left:147px;top:541px;width:2px;height:2px;background:#909090"></div>
<div style="left:150px;top:544px;width:2px;height:2px;background:#909090"></div>
<div style="left:147px;top:547px;width:2px;height:2px;background:#909090"></div>
<div style="left:150px;top:550px;width:2px;height:2px;background:#909090"></div>
<div style="left:147px;top:553px;width:2px;height:2px;background:#909090"></div>
<div style="left:150px;top:556px;width:2px;height:2px;background:#909090"></div>
<div style="left:147px;top:559px;width:2px;height:2px;background:#909090"></div>
<div style="left:150px;top:562px;width:2px;height:2px;background:#909090"></div>
<div style="left:147px;top:565px;width:2px;height:2px;background:#909090"></div>
<div style="left:150px;top:568px;width:2px;height:2px;background:#909090"></div>
<div style="left:147px;top:571px;width:2px;height:2px;background:#909090"></div>
<div style="left:150px;top:574px;width:2px;height:2px;background:#909090"></div>
<svg style="left:0px;top:0px" width="24" height="22" viewBox="0 0 24 22"><path d="M8 4.5 A7.6 5.6 0 0 0 7 15" stroke="#5a5ab8" stroke-width="1.7" fill="none" opacity=".85"/><path d="M14 4.5 A7.6 5.6 0 0 1 11 15.4" stroke="#d84858" stroke-width="1.7" fill="none" opacity=".85"/><text x="11.3" y="12" font-size="6" font-family="Liberation Sans" font-weight="bold" text-anchor="middle" fill="#111" letter-spacing="-0.3">PoS</text></svg>
<svg style="left:567px;top:87px" width="7" height="4" viewBox="0 0 7 4"><path d="M0 0 H6 L3 3 Z" fill="#000"/></svg>
<svg style="left:0;top:0" width="0" height="0"><defs><linearGradient id="scr" x1="0" y1="0" x2="1" y2="1"><stop offset="0" stop-color="#6d92f4"/><stop offset=".55" stop-color="#2050e8"/><stop offset="1" stop-color="#0018b8"/></linearGradient><linearGradient id="srvp" x1="0" y1="0" x2="0" y2="1"><stop offset="0" stop-color="#8cc8f4"/><stop offset="1" stop-color="#2a7cc8"/></linearGradient><linearGradient id="srvs" x1="0" y1="0" x2="1" y2="0"><stop offset="0" stop-color="#8a94a4"/><stop offset="1" stop-color="#4a5466"/></linearGradient><linearGradient id="redg" x1="0" y1="0" x2="0" y2="1"><stop offset="0" stop-color="#ff8a8a"/><stop offset="1" stop-color="#e02a2a"/></linearGradient><linearGradient id="red2" x1="0" y1="0" x2="1" y2="1"><stop offset="0" stop-color="#e84040"/><stop offset="1" stop-color="#b01010"/></linearGradient><linearGradient id="grng" x1="0" y1="0" x2="0" y2="1"><stop offset="0" stop-color="#a8f890"/><stop offset="1" stop-color="#48c830"/></linearGradient><linearGradient id="blug" x1="0" y1="0" x2="1" y2="1"><stop offset="0" stop-color="#6ab8f8"/><stop offset="1" stop-color="#1a5ab0"/></linearGradient><linearGradient id="navh" x1="0" y1="0" x2="0" y2="1"><stop offset="0" stop-color="#f0f4f8"/><stop offset="1" stop-color="#c0c8d0"/></linearGradient></defs></svg>
<svg style="left:35px;top:50px" width="28" height="28" viewBox="0 0 28 28"><path d="M2.4 4.0 Q8.2 1.6 13.9 3.7 L9.5 4.8 Z" fill="#b8bec8"/><rect x="2.8" y="4.0" width="6.7" height="11.5" fill="#d8dde4" stroke="#6a7280" stroke-width=".8"/><rect x="3.7" y="6.0" width="4.7" height="7.0" fill="url(#srvp)"/><path d="M4.2 8.2 H7.9 M4.2 10.7 H7.9 M4.2 13.2 H7.9" stroke="#a8dcfc" stroke-width=".7" opacity=".8"/><path d="M9.5 4.4 L13.9 3.7 V14.7 L9.5 15.7 Z" fill="url(#srvs)" stroke="#4a5260" stroke-width=".6"/><path d="M15.2 21.6 L14.2 25.7 H23.8 L25.3 21.6 Z" fill="#d4d6da" stroke="#8a8e94" stroke-width=".7"/><rect x="13.1" y="11.4" width="12.3" height="10.6" rx=".8" fill="#e4e6ea" stroke="#7c8086" stroke-width=".8"/><rect x="14.2" y="12.6" width="10.1" height="7.8" fill="url(#scr)"/><path d="M15.7 20.1 L18.6 12.8 M17.3 20.1 L21.9 12.8" stroke="#8eaaf8" stroke-width=".9" opacity=".55"/><path d="M4 15 L7.8 15 Q8.2 17.6 10.2 18.6 L10 16.2 L14 20.6 L8.8 25.7 L8.8 23 Q4.2 22.4 4 15 Z" fill="url(#redg)" stroke="#b01818" stroke-width=".8"/></svg>
<svg style="left:118px;top:50px" width="28" height="28" viewBox="0 0 28 28"><path d="M8.0 3.8 Q17.1 1.4 26.2 3.5 L19.3 4.6 Z" fill="#b8bec8"/><rect x="8.4" y="3.8" width="10.9" height="21.8" fill="#d8dde4" stroke="#6a7280" stroke-width=".8"/><rect x="9.3" y="5.8" width="8.9" height="17.3" fill="url(#srvp)"/><path d="M9.8 8.0 H17.7 M9.8 10.5 H17.7 M9.8 13.0 H17.7" stroke="#a8dcfc" stroke-width=".7" opacity=".8"/><path d="M19.3 4.2 L26.2 3.5 V24.8 L19.3 25.8 Z" fill="url(#srvs)" stroke="#4a5260" stroke-width=".6"/><path d="M3 18.5 L9.6 13 L11.4 16 L14.8 13.4 L16 17.8 L10.6 25.8 Z" fill="url(#red2)" stroke="#901010" stroke-width=".6"/></svg>
<svg style="left:216px;top:50px" width="28" height="28" viewBox="0 0 28 28"><path d="M3.1 4.0 Q9.0 1.6 14.9 3.7 L10.4 4.8 Z" fill="#b8bec8"/><rect x="3.5" y="4.0" width="6.9" height="12.4" fill="#d8dde4" stroke="#6a7280" stroke-width=".8"/><rect x="4.4" y="6.0" width="4.9" height="7.9" fill="url(#srvp)"/><path d="M4.9 8.2 H8.8 M4.9 10.7 H8.8 M4.9 13.2 H8.8" stroke="#a8dcfc" stroke-width=".7" opacity=".8"/><path d="M10.4 4.4 L14.9 3.7 V15.6 L10.4 16.6 Z" fill="url(#srvs)" stroke="#4a5260" stroke-width=".6"/><path d="M15.9 21.7 L14.9 25.7 H24.8 L26.3 21.7 Z" fill="#d4d6da" stroke="#8a8e94" stroke-width=".7"/><rect x="13.8" y="11.7" width="12.6" height="10.4" rx=".8" fill="#e4e6ea" stroke="#7c8086" stroke-width=".8"/><rect x="14.9" y="12.9" width="10.4" height="7.6" fill="url(#scr)"/><path d="M16.4 20.2 L19.4 13.1 M18.1 20.2 L22.8 13.1" stroke="#8eaaf8" stroke-width=".9" opacity=".55"/><path d="M14.2 7 L18.5 2.2 L18.5 4.8 Q23.5 5.5 23.5 12.6 L20.5 12.6 Q20.5 9 18.5 9 L18.5 11.5 Z" fill="url(#grng)" stroke="#1e8a14" stroke-width=".8"/></svg>
<svg style="left:308px;top:50px" width="28" height="28" viewBox="0 0 28 28"><path d="M3.1 4.0 Q9.0 1.6 14.9 3.7 L10.4 4.8 Z" fill="#b8bec8"/><rect x="3.5" y="4.0" width="6.9" height="12.4" fill="#d8dde4" stroke="#6a7280" stroke-width=".8"/><rect x="4.4" y="6.0" width="4.9" height="7.9" fill="url(#srvp)"/><path d="M4.9 8.2 H8.8 M4.9 10.7 H8.8 M4.9 13.2 H8.8" stroke="#a8dcfc" stroke-width=".7" opacity=".8"/><path d="M10.4 4.4 L14.9 3.7 V15.6 L10.4 16.6 Z" fill="url(#srvs)" stroke="#4a5260" stroke-width=".6"/><path d="M15.9 21.7 L14.9 25.7 H24.8 L26.3 21.7 Z" fill="#d4d6da" stroke="#8a8e94" stroke-width=".7"/><rect x="13.8" y="11.7" width="12.6" height="10.4" rx=".8" fill="#e4e6ea" stroke="#7c8086" stroke-width=".8"/><rect x="14.9" y="12.9" width="10.4" height="7.6" fill="url(#scr)"/><path d="M16.4 20.2 L19.4 13.1 M18.1 20.2 L22.8 13.1" stroke="#8eaaf8" stroke-width=".9" opacity=".55"/><path d="M5 15 L8.8 15 Q9.2 17.6 11.2 18.6 L11 16.2 L14.8 20.6 L9.6 25.7 L9.6 23 Q5.2 22.4 5 15 Z" fill="url(#grng)" stroke="#1e7a10" stroke-width=".8"/></svg>
<svg style="left:401px;top:50px" width="28" height="28" viewBox="0 0 28 28"><path d="M3.2 12.4 Q3 6 8 3.5 Q13 1 18 4.2 L21.6 4 L23 15.5 L12 12 L15.5 10.5 Q12.5 7 8.8 9.3 Q7 10.5 7 12.4 Z" fill="url(#blug)" stroke="#10407a" stroke-width=".8"/><path d="M6.2 12.8 L7.5 22.8 L10 21.8 Q14 26 19.5 24.5 Q24.5 22.5 24.8 16.3 L20.8 16.3 Q20.5 19.5 17.5 20.2 Q14.5 20.8 12.8 18.5 L15.5 17.3 Z" fill="url(#blug)" stroke="#10407a" stroke-width=".8"/></svg>
<svg style="left:498px;top:50px" width="28" height="28" viewBox="0 0 28 28"><path d="M12.5 9.4 L11.5 11.9 H18.9 L20.4 9.4 Z" fill="#d4d6da" stroke="#8a8e94" stroke-width=".7"/><rect x="10.4" y="3.5" width="10.1" height="6.3" rx=".8" fill="#e4e6ea" stroke="#7c8086" stroke-width=".8"/><rect x="11.5" y="4.7" width="7.9" height="3.5" fill="url(#scr)"/><path d="M13.0 7.9 L14.9 4.9 M13.8 7.9 L17.6 4.9" stroke="#8eaaf8" stroke-width=".9" opacity=".55"/><path d="M5.6 19.2 L4.6 22.8 H11.9 L13.4 19.2 Z" fill="#d4d6da" stroke="#8a8e94" stroke-width=".7"/><rect x="3.5" y="10.4" width="10.0" height="9.2" rx=".8" fill="#e4e6ea" stroke="#7c8086" stroke-width=".8"/><rect x="4.6" y="11.6" width="7.8" height="6.4" fill="url(#scr)"/><path d="M6.1 17.7 L8.0 11.8 M6.9 17.7 L10.7 11.8" stroke="#8eaaf8" stroke-width=".9" opacity=".55"/><path d="M16.1 21.7 L15.1 25.7 H24.8 L26.3 21.7 Z" fill="#d4d6da" stroke="#8a8e94" stroke-width=".7"/><rect x="14.0" y="11.7" width="12.4" height="10.4" rx=".8" fill="#e4e6ea" stroke="#7c8086" stroke-width=".8"/><rect x="15.1" y="12.9" width="10.2" height="7.6" fill="url(#scr)"/><path d="M16.6 20.2 L19.5 13.1 M18.2 20.2 L22.8 13.1" stroke="#8eaaf8" stroke-width=".9" opacity=".55"/></svg>
<svg style="left:4px;top:132px" width="30" height="30" viewBox="0 0 30 30"><path d="M3 21 L12 15.5 L27 17.4 L18.4 26.2 Z" fill="#56cc3c" stroke="#2a8a1a" stroke-width=".7"/><path d="M7 20.6 L12.5 17.5 L22.5 18.4 L17.6 22.8 Z" fill="#dfe6ee"/><path d="M19.2 14.6 L24 11.2 V19.6 L19.2 22 Z" fill="#c4ccd6" stroke="#8a94a2" stroke-width=".5"/><path d="M6.8 12.4 L12.3 5.8 L15.8 11 V14.5 L19.2 14.6 V22 L6.8 20.8 Z" fill="#f6f8fb" stroke="#9aa4b2" stroke-width=".5"/><path d="M8.5 3.2 L22.7 3.2 L24.8 11.7 L19.5 14.8 L15.6 14.6 L12.3 5.6 Z" fill="#2e5f9e"/><path d="M4.1 12.4 L8.5 3.2 L12.3 5.6 L6.8 12.6 Z" fill="#4f80bf"/><path d="M12.3 5.6 L15.6 14.6 L19.5 14.8 L24.8 11.7" stroke="#234c84" stroke-width=".6" fill="none"/><rect x="11.2" y="8.6" width="1.7" height="2.6" fill="#6aa2dc"/><rect x="8.2" y="14" width="1.8" height="2.6" fill="#6aa2dc"/><rect x="15.3" y="16" width="1.8" height="2.8" fill="#6aa2dc"/><rect x="11.2" y="15" width="2.4" height="6" fill="#5f6a78"/></svg>
<svg style="left:4px;top:162px" width="30" height="30" viewBox="0 0 30 30"><path d="M5 3 L22 4.2 L24.8 5.5 V25.6 L22 26.4 L5 22.8 Z" fill="#5a6470"/><path d="M5 3 L22 4.2 V26.4 L5 22.8 Z" fill="#f4f7fa" stroke="#7a8692" stroke-width=".9"/><path d="M6 8 L21.5 9 M6 12.5 L21.5 13.5 M6 17 L21.5 18 M10 3.6 V23.5 M14 3.8 V24.5 M18 4 V25.5" stroke="#c8d8e4" stroke-width=".6"/><path d="M22 4.2 L24.8 5.5 V25.6 L22 26.4 Z" fill="url(#srvs)"/><path d="M7 11 L9 8.5 L11 10.5 L12.5 9.8 L14.5 10.5 L15.5 8.8 L17.5 12 L19 12.5 L21.5 15.5 V24 L7 21 Z" fill="#3f9ae8"/><path d="M7 13 L8.5 11.5 L10.5 14 L12.5 13.5 L15 13.8 L17 15.5 L18.8 15 L21.5 19 V24 L7 21 Z" fill="#42b02a"/></svg>
<svg style="left:4px;top:192px" width="30" height="30" viewBox="0 0 30 30"><path d="M5 3 L22 4.2 L24.8 5.5 V25.6 L22 26.4 L5 22.8 Z" fill="#5a6470"/><path d="M5 3 L22 4.2 V26.4 L5 22.8 Z" fill="#f4f7fa" stroke="#7a8692" stroke-width=".9"/><path d="M6 8 L21.5 9 M6 12.5 L21.5 13.5 M6 17 L21.5 18 M10 3.6 V23.5 M14 3.8 V24.5 M18 4 V25.5" stroke="#c8d8e4" stroke-width=".6"/><path d="M22 4.2 L24.8 5.5 V25.6 L22 26.4 Z" fill="url(#srvs)"/><rect x="7" y="11.6" width="2" height="10.2" fill="#48b030"/><rect x="9" y="11" width="2" height="11.5" fill="#3a8ee6"/><rect x="11" y="13" width="1.8" height="9.7" fill="#e6c420"/><rect x="14" y="9" width="2" height="14.5" fill="#48b030"/><rect x="16" y="9" width="1.8" height="14.7" fill="#3a8ee6"/><rect x="17.8" y="7.5" width="1.9" height="17.1" fill="#e6c420"/></svg>
<svg style="left:4px;top:222px" width="30" height="30" viewBox="0 0 30 30"><path d="M6 3.2 H17.5 L23.8 9 V26.6 H6 Z" fill="#f6f8fb" stroke="#a4acb8" stroke-width=".8"/><path d="M17.5 3.2 V9 H23.8" fill="#d8dee6" stroke="#a4acb8" stroke-width=".8"/><path d="M2.8 19.8 L9.2 13.8 L10.8 16.6 L14 14 L15.6 17.6 L10.6 26.6 Z" fill="url(#red2)" stroke="#8a1010" stroke-width=".6"/></svg>
<svg style="left:4px;top:252px" width="30" height="30" viewBox="0 0 30 30"><path d="M7.8 6 L10 4 H22 L20 6 Z" fill="#a8d8fc"/><rect x="7.8" y="6" width="12.2" height="10.8" fill="#6ab4f4" stroke="#2a70b8" stroke-width=".6"/><path d="M20 6 L22 4 V14.8 L20 16.8 Z" fill="#1e5a9e"/><rect x="3.2" y="14.5" width="10.8" height="11.9" rx="1" fill="#f4e070" stroke="#b09a28" stroke-width=".7"/><rect x="13.5" y="14.5" width="11.5" height="11.9" rx="1" fill="#4cb83a" stroke="#2a7a1a" stroke-width=".7"/><path d="M25 14.5 L27 13.3 V25 L25 26.4 Z" fill="#2a7a1a"/></svg>
<svg style="left:4px;top:282px" width="30" height="30" viewBox="0 0 30 30"><path d="M15.2 22.7 Q14.5 14.8 20.5 13.5 Q27 14.5 27 22.7 Z" fill="#80888f" stroke="#5a6066" stroke-width=".5"/><path d="M19.4 13.8 L20.2 19 L21.2 13.8 Z" fill="#3a9ae8"/><ellipse cx="19.5" cy="9.6" rx="4" ry="5.4" fill="#eec68c"/><path d="M15.3 9 Q14.8 3.9 19.5 3.9 Q24 3.9 23.8 9 L22.8 7 Q19.5 5.5 16.2 7.5 Z" fill="#8a6a48"/><path d="M2.8 25.9 Q2 17 10 16 Q17 17 16.7 25.9 Z" fill="#1c4a8c" stroke="#123266" stroke-width=".5"/><path d="M9 16.2 L10.4 23 L11.6 16.2 Z" fill="#fff"/><path d="M10 17 L10.5 22.5 L11.1 17 Z" fill="#d02020"/><ellipse cx="10.6" cy="11.4" rx="4.4" ry="5.2" fill="#f2c88e"/><path d="M6 11 Q5.6 6 10.6 6 Q15.4 6 15.2 10.5 L14.2 8.8 Q10.5 7.2 7.2 9.3 Z" fill="#2c3a4c"/></svg>
<svg style="left:4px;top:312px" width="30" height="30" viewBox="0 0 30 30"><path d="M6.7 26.7 Q6 16 15.2 15 Q24 16 23.8 26.7 Z" fill="#1c5294" stroke="#123a70" stroke-width=".5"/><path d="M12 15.6 Q15 18.5 18.5 15.6" stroke="#f2d8a8" stroke-width="1.4" fill="none"/><ellipse cx="14.2" cy="11" rx="5.6" ry="7.6" fill="#f0c88c"/><path d="M8.5 10 Q8 3 14.2 3 Q20.4 3 19.9 10 L18.8 7 Q14 5 9.6 7.5 Z" fill="#8a6a46"/></svg>
<svg style="left:4px;top:342px" width="30" height="30" viewBox="0 0 30 30"><path d="M8 4.5 Q14 2.5 24.8 3.5 V23 L12 25.5 Z" fill="#7e8a98" stroke="#4c5664" stroke-width=".7"/><path d="M11 6 L22 5.5 V21.5 L11 23 Z" fill="#1e2630"/><path d="M5 4.2 L11 6.2 V26.6 L5 22.5 Z" fill="#9aa6b4" stroke="#4c5664" stroke-width=".7"/><circle cx="7.5" cy="15" r="1.1" fill="#d8b040"/><path d="M27 11.5 Q27 19 18.5 19 V21.3 L10.6 16 L18.5 10.6 V13 Q23 13 23.5 11.5 Z" fill="url(#grng)" stroke="#1e8a14" stroke-width=".7"/></svg>
<svg style="left:4px;top:372px" width="30" height="30" viewBox="0 0 30 30"><ellipse cx="14.9" cy="4.9" rx="6" ry="1.9" fill="#b4bcc4" stroke="#5a646e" stroke-width=".7"/><rect x="7.1" y="7.6" width="17.7" height="18.4" fill="#2a72c8" stroke="#184a8c" stroke-width=".7"/><path d="M5 10 H20.6 V15 H5 Z" fill="#e6eaee" stroke="#6a747e" stroke-width=".6"/><path d="M5 16 H20.6 V22.7 H5 Z" fill="#d8dde2" stroke="#6a747e" stroke-width=".6"/></svg>
<svg style="left:4px;top:402px" width="30" height="30" viewBox="0 0 30 30"><path d="M4.2 7.8 L25.5 18 Q27.5 19.5 26.6 21.5 Q25.5 23.3 23.5 22.5 L2.8 13 Q1.8 10.5 4.2 7.8 Z" fill="#f2d890" stroke="#a88838" stroke-width=".7"/><ellipse cx="25" cy="20.3" rx="1.8" ry="2.4" fill="#e0c070" stroke="#a88838" stroke-width=".5"/><circle cx="13.1" cy="12.4" r="2.5" fill="#e05050"/><path d="M11.8 14 L10.5 18 L12.3 17 M13.6 14.5 L13.5 18.5" stroke="#d84848" stroke-width="1.4" fill="none"/></svg>
<svg style="left:4px;top:432px" width="30" height="30" viewBox="0 0 30 30"><path d="M8 4.4 H25 Q27 5 26.4 6.5 Q24.5 6.6 24.2 8 V19.6 H7 V6 Q7 4.4 8 4.4 Z" fill="#f8f8fa" stroke="#9a9ea4" stroke-width=".6"/><path d="M4.5 18 H20.5 Q22.8 19 22 22.5 Q21.5 26 19.5 26 H4.5 Q2.8 25 3.2 21.5 Q3.6 18.5 4.5 18 Z" fill="#f4e048" stroke="#a89420" stroke-width=".6"/></svg>
<svg style="left:4px;top:462px" width="30" height="30" viewBox="0 0 30 30"><path d="M7.5 14 L26 17 L24 25.5 L5.3 22.3 Z" fill="#c8d0da" stroke="#5a6470" stroke-width=".7"/><path d="M5.8 3.9 L24.8 6.5 L22.4 17 L3.2 14.3 Z" fill="#78aee8" stroke="#2a5a9a" stroke-width=".7"/><rect x="6.8" y="8.5" width="2.8" height="2.2" fill="#e8c040"/><path d="M15.5 9.5 L21 10.3 L20 15.2 L14.5 14.4 Z" fill="#e8d0a0"/><circle cx="18" cy="11" r="1.3" fill="#c8904a"/></svg>
<svg style="left:4px;top:492px" width="30" height="30" viewBox="0 0 30 30"><path d="M15.2 22.7 Q14.5 14.8 20.5 13.5 Q27 14.5 27 22.7 Z" fill="#80888f" stroke="#5a6066" stroke-width=".5"/><path d="M19.4 13.8 L20.2 19 L21.2 13.8 Z" fill="#3a9ae8"/><ellipse cx="19.5" cy="9.6" rx="4" ry="5.4" fill="#eec68c"/><path d="M15.3 9 Q14.8 3.9 19.5 3.9 Q24 3.9 23.8 9 L22.8 7 Q19.5 5.5 16.2 7.5 Z" fill="#8a6a48"/><path d="M2.8 25.9 Q2 17 10 16 Q17 17 16.7 25.9 Z" fill="#1c4a8c" stroke="#123266" stroke-width=".5"/><path d="M9 16.2 L10.4 23 L11.6 16.2 Z" fill="#fff"/><path d="M10 17 L10.5 22.5 L11.1 17 Z" fill="#d02020"/><ellipse cx="10.6" cy="11.4" rx="4.4" ry="5.2" fill="#f2c88e"/><path d="M6 11 Q5.6 6 10.6 6 Q15.4 6 15.2 10.5 L14.2 8.8 Q10.5 7.2 7.2 9.3 Z" fill="#2c3a4c"/></svg>
<svg style="left:4px;top:522px" width="30" height="30" viewBox="0 0 30 30"><path d="M9.5 5 L27 7.2 L21 24.5 L3.2 21.5 Z" fill="#f8e68a" stroke="#b89a30" stroke-width=".8"/><path d="M10.5 9 L19.5 10.3 M9.5 12 L18.5 13.3 M8.5 15 L17.5 16.3 M7.5 18 L15.5 19.2" stroke="#6a6a58" stroke-width=".7"/><path d="M26.5 14.5 L17 24 L14.8 25.5 L15.5 23 L25 13.2 Z" fill="#f0c838" stroke="#5a4a20" stroke-width=".6"/><path d="M25 13.2 L26.5 14.5 L27.5 13.4 L26 12 Z" fill="#e03838"/></svg>
<svg style="left:4px;top:552px" width="30" height="30" viewBox="0 0 30 30"><path d="M9.5 5 L27 7.2 L21 24.5 L3.2 21.5 Z" fill="#f8e68a" stroke="#b89a30" stroke-width=".8"/><path d="M10.5 9 L19.5 10.3 M9.5 12 L18.5 13.3 M8.5 15 L17.5 16.3 M7.5 18 L15.5 19.2" stroke="#6a6a58" stroke-width=".7"/></svg>
<svg style="left:4px;top:612px" width="30" height="30" viewBox="0 0 30 30"><path d="M9 13 V9.5 Q9 4 14.5 4 Q20 4 20 9.5 V13" stroke="#8c9096" stroke-width="2.4" fill="none"/><rect x="6" y="12.5" width="17" height="13.5" rx="2.5" fill="#f2dc68" stroke="#a89020" stroke-width=".8"/><rect x="11.5" y="17.5" width="7.5" height="3.2" rx=".8" fill="#80848a"/></svg>
<svg style="left:4px;top:744px" width="30" height="30" viewBox="0 0 30 30"><path d="M5 7 V23.5 Q14.8 28 24.6 23.5 V7 Z" fill="#c0c8d0"/><path d="M5 11 V22.5 Q14.8 26 24.6 22.5 V11 Z" fill="#c4dc20"/><path d="M5 15 Q14.8 18.5 24.6 15 M5 19 Q14.8 22.5 24.6 19" stroke="#7a9a08" stroke-width=".9" fill="none"/><path d="M5 22.5 Q14.8 26 24.6 22.5 V23.5 Q14.8 27.5 5 23.5 Z" fill="#a8b0b8"/><ellipse cx="14.8" cy="6.4" rx="9.8" ry="3" fill="#eef2f6" stroke="#8a949e" stroke-width=".7"/><path d="M20 8.5 Q23 8 24.6 7 V11 Q22 12 20 12 Z" fill="#8a96a2" opacity=".6"/><path d="M5 7 V23.5 M24.6 7 V23.5" stroke="#7a848e" stroke-width=".7"/></svg>
<svg style="left:4px;top:775px" width="30" height="30" viewBox="0 0 30 30"><path d="M24.60 12.34 L26.18 12.83 L25.85 14.45 L24.21 14.29 L23.36 15.67 L24.25 17.06 L22.96 18.10 L21.80 16.91 L20.26 17.43 L20.06 19.07 L18.40 19.03 L18.28 17.38 L16.76 16.78 L15.55 17.91 L14.31 16.81 L15.28 15.47 L14.50 14.04 L12.85 14.12 L12.60 12.48 L14.20 12.08 L14.53 10.48 L13.21 9.48 L14.08 8.07 L15.56 8.79 L16.84 7.78 L16.47 6.16 L18.04 5.64 L18.72 7.14 L20.34 7.19 L21.10 5.72 L22.64 6.32 L22.19 7.91 L23.41 8.99 L24.93 8.35 L25.73 9.80 L24.36 10.73 Z" fill="#d4d8dc" stroke="#6a7076" stroke-width=".7"/><circle cx="19.4" cy="12.3" r="3" fill="#f0f2f4" stroke="#8a9096" stroke-width=".6"/><circle cx="19.4" cy="12.3" r="1.3" fill="#40464c"/><path d="M15.90 17.81 L17.64 18.00 L17.64 19.80 L15.90 19.99 L15.29 21.66 L16.51 22.93 L15.35 24.31 L13.89 23.33 L12.34 24.22 L12.46 25.98 L10.69 26.29 L10.20 24.60 L8.44 24.29 L7.41 25.71 L5.85 24.81 L6.56 23.20 L5.41 21.84 L3.71 22.26 L3.09 20.56 L4.67 19.79 L4.67 18.01 L3.09 17.24 L3.71 15.54 L5.41 15.96 L6.56 14.60 L5.85 12.99 L7.41 12.09 L8.44 13.51 L10.20 13.20 L10.69 11.51 L12.46 11.82 L12.34 13.58 L13.89 14.47 L15.35 13.49 L16.51 14.87 L15.29 16.14 Z" fill="#dcdfe2" stroke="#6a7076" stroke-width=".7"/><circle cx="10.3" cy="18.9" r="3.2" fill="#f0f2f4" stroke="#8a9096" stroke-width=".6"/><circle cx="10.3" cy="18.9" r="1.4" fill="#40464c"/></svg>
<svg style="left:130px;top:816px" width="9" height="12" viewBox="0 0 9 12"><path d="M0.5 0.5 L3 3 L0.5 5.5 M4 0.5 L6.5 3 L4 5.5" stroke="#000" stroke-width="1.2" fill="none"/><path d="M2 9 H7 L4.5 11.5Z" fill="#000"/></svg>
<svg style="left:287px;top:121px" width="9" height="6" viewBox="0 0 9 6"><path d="M0.5 0.5 L4.5 4.5 L8.5 0.5" stroke="#444" stroke-width="1.1" fill="none"/></svg>
<svg style="left:413px;top:121px" width="9" height="6" viewBox="0 0 9 6"><path d="M0.5 0.5 L4.5 4.5 L8.5 0.5" stroke="#444" stroke-width="1.1" fill="none"/></svg>
<svg style="left:757px;top:121px" width="9" height="6" viewBox="0 0 9 6"><path d="M0.5 0.5 L4.5 4.5 L8.5 0.5" stroke="#444" stroke-width="1.1" fill="none"/></svg>
<svg style="left:689px;top:164px" width="10" height="9" viewBox="0 0 10 9"><path d="M1 8 L5 1" stroke="#606060" stroke-width="1.2"/><path d="M5 1 L9 8 H1" stroke="#fff" stroke-width="1" fill="none"/></svg>
<svg style="left:868px;top:180px" width="12" height="12" viewBox="0 0 12 12"><rect x="0.5" y="0.5" width="11" height="11" fill="#fff" stroke="#ececec"/><path d="M0.5 12 V0.5 H12" stroke="#a0a0a0" fill="none"/><path d="M3 5 L5 8.5 L9.5 2.5" stroke="#000" stroke-width="2" fill="none"/></svg>
<svg style="left:868px;top:198px" width="12" height="12" viewBox="0 0 12 12"><rect x="0.5" y="0.5" width="11" height="11" fill="#fff" stroke="#ececec"/><path d="M0.5 12 V0.5 H12" stroke="#a0a0a0" fill="none"/><path d="M3 5 L5 8.5 L9.5 2.5" stroke="#000" stroke-width="2" fill="none"/></svg>
<svg style="left:868px;top:216px" width="12" height="12" viewBox="0 0 12 12"><rect x="0.5" y="0.5" width="11" height="11" fill="#fff" stroke="#ececec"/><path d="M0.5 12 V0.5 H12" stroke="#a0a0a0" fill="none"/><path d="M3 5 L5 8.5 L9.5 2.5" stroke="#000" stroke-width="2" fill="none"/></svg>
<svg style="left:868px;top:234px" width="12" height="12" viewBox="0 0 12 12"><rect x="0.5" y="0.5" width="11" height="11" fill="#fff" stroke="#ececec"/><path d="M0.5 12 V0.5 H12" stroke="#a0a0a0" fill="none"/><path d="M3 5 L5 8.5 L9.5 2.5" stroke="#000" stroke-width="2" fill="none"/></svg>
<svg style="left:868px;top:252px" width="12" height="12" viewBox="0 0 12 12"><rect x="0.5" y="0.5" width="11" height="11" fill="#fff" stroke="#ececec"/><path d="M0.5 12 V0.5 H12" stroke="#a0a0a0" fill="none"/><path d="M3 5 L5 8.5 L9.5 2.5" stroke="#000" stroke-width="2" fill="none"/></svg>
<svg style="left:868px;top:270px" width="12" height="12" viewBox="0 0 12 12"><rect x="0.5" y="0.5" width="11" height="11" fill="#fff" stroke="#ececec"/><path d="M0.5 12 V0.5 H12" stroke="#a0a0a0" fill="none"/><path d="M3 5 L5 8.5 L9.5 2.5" stroke="#000" stroke-width="2" fill="none"/></svg>
<svg style="left:868px;top:288px" width="12" height="12" viewBox="0 0 12 12"><rect x="0.5" y="0.5" width="11" height="11" fill="#fff" stroke="#ececec"/><path d="M0.5 12 V0.5 H12" stroke="#a0a0a0" fill="none"/><path d="M3 5 L5 8.5 L9.5 2.5" stroke="#000" stroke-width="2" fill="none"/></svg>
<svg style="left:868px;top:306px" width="12" height="12" viewBox="0 0 12 12"><rect x="0.5" y="0.5" width="11" height="11" fill="#fff" stroke="#ececec"/><path d="M0.5 12 V0.5 H12" stroke="#a0a0a0" fill="none"/><path d="M3 5 L5 8.5 L9.5 2.5" stroke="#000" stroke-width="2" fill="none"/></svg>
<svg style="left:868px;top:324px" width="12" height="12" viewBox="0 0 12 12"><rect x="0.5" y="0.5" width="11" height="11" fill="#fff" stroke="#ececec"/><path d="M0.5 12 V0.5 H12" stroke="#a0a0a0" fill="none"/><path d="M3 5 L5 8.5 L9.5 2.5" stroke="#000" stroke-width="2" fill="none"/></svg>
<svg style="left:868px;top:342px" width="12" height="12" viewBox="0 0 12 12"><rect x="0.5" y="0.5" width="11" height="11" fill="#fff" stroke="#ececec"/><path d="M0.5 12 V0.5 H12" stroke="#a0a0a0" fill="none"/><path d="M3 5 L5 8.5 L9.5 2.5" stroke="#000" stroke-width="2" fill="none"/></svg>
<svg style="left:868px;top:360px" width="12" height="12" viewBox="0 0 12 12"><rect x="0.5" y="0.5" width="11" height="11" fill="#fff" stroke="#ececec"/><path d="M0.5 12 V0.5 H12" stroke="#a0a0a0" fill="none"/><path d="M3 5 L5 8.5 L9.5 2.5" stroke="#000" stroke-width="2" fill="none"/></svg>
<svg style="left:868px;top:378px" width="12" height="12" viewBox="0 0 12 12"><rect x="0.5" y="0.5" width="11" height="11" fill="#fff" stroke="#ececec"/><path d="M0.5 12 V0.5 H12" stroke="#a0a0a0" fill="none"/><path d="M3 5 L5 8.5 L9.5 2.5" stroke="#000" stroke-width="2" fill="none"/></svg>
<svg style="left:868px;top:396px" width="12" height="12" viewBox="0 0 12 12"><rect x="0.5" y="0.5" width="11" height="11" fill="#fff" stroke="#ececec"/><path d="M0.5 12 V0.5 H12" stroke="#a0a0a0" fill="none"/><path d="M3 5 L5 8.5 L9.5 2.5" stroke="#000" stroke-width="2" fill="none"/></svg>
<svg style="left:868px;top:414px" width="12" height="12" viewBox="0 0 12 12"><rect x="0.5" y="0.5" width="11" height="11" fill="#fff" stroke="#ececec"/><path d="M0.5 12 V0.5 H12" stroke="#a0a0a0" fill="none"/><path d="M3 5 L5 8.5 L9.5 2.5" stroke="#000" stroke-width="2" fill="none"/></svg>
<svg style="left:868px;top:432px" width="12" height="12" viewBox="0 0 12 12"><rect x="0.5" y="0.5" width="11" height="11" fill="#fff" stroke="#ececec"/><path d="M0.5 12 V0.5 H12" stroke="#a0a0a0" fill="none"/><path d="M3 5 L5 8.5 L9.5 2.5" stroke="#000" stroke-width="2" fill="none"/></svg>
<svg style="left:868px;top:450px" width="12" height="12" viewBox="0 0 12 12"><rect x="0.5" y="0.5" width="11" height="11" fill="#fff" stroke="#ececec"/><path d="M0.5 12 V0.5 H12" stroke="#a0a0a0" fill="none"/><path d="M3 5 L5 8.5 L9.5 2.5" stroke="#000" stroke-width="2" fill="none"/></svg>
<svg style="left:868px;top:468px" width="12" height="12" viewBox="0 0 12 12"><rect x="0.5" y="0.5" width="11" height="11" fill="#fff" stroke="#ececec"/><path d="M0.5 12 V0.5 H12" stroke="#a0a0a0" fill="none"/><path d="M3 5 L5 8.5 L9.5 2.5" stroke="#000" stroke-width="2" fill="none"/></svg>
<svg style="left:868px;top:486px" width="12" height="12" viewBox="0 0 12 12"><rect x="0.5" y="0.5" width="11" height="11" fill="#fff" stroke="#ececec"/><path d="M0.5 12 V0.5 H12" stroke="#a0a0a0" fill="none"/><path d="M3 5 L5 8.5 L9.5 2.5" stroke="#000" stroke-width="2" fill="none"/></svg>
<svg style="left:166px;top:488px" width="7" height="10" viewBox="0 0 7 10"><path d="M1 0.5 L6 4.5 L1 8.5" stroke="#000" stroke-width="1.3" fill="none"/><rect x="0.5" y="3.5" width="1.5" height="2" fill="#000"/></svg>
<svg style="left:668px;top:842px" width="16" height="4" viewBox="0 0 16 4"><circle cx="8" cy="8.3" r="7.6" fill="#3aa030"/><path d="M3 5 Q5 2 8 1.6 L6 5 Z" fill="#4a78d0"/><ellipse cx="9" cy="5.5" rx="2.6" ry="3.5" fill="#4a9ae8"/><path d="M2 6 Q4 3 6 2" stroke="#90d880" stroke-width="1" fill="none"/></svg>
<div class="t" style="left:24px;top:4.84px;font-size:12px;font-weight:normal;color:#000;letter-spacing:-0.020px;font-family:'Liberation Sans', sans-serif;">dkPos - [Syning - Sýningarfyrirtækið]</div>
<div class="t" style="left:15px;top:28.84px;font-size:12px;font-weight:normal;color:#000;letter-spacing:-0.336px;font-family:'Liberation Sans', sans-serif;">File</div>
<div class="t" style="left:45px;top:28.84px;font-size:12px;font-weight:normal;color:#000;letter-spacing:0.106px;font-family:'Liberation Sans', sans-serif;">Gagnaflutningur</div>
<div class="t" style="left:144px;top:28.84px;font-size:12px;font-weight:normal;color:#000;letter-spacing:-0.113px;font-family:'Liberation Sans', sans-serif;">Samskipti</div>
<div class="t" style="left:208px;top:28.84px;font-size:12px;font-weight:normal;color:#000;letter-spacing:-0.918px;font-family:'Liberation Sans', sans-serif;">Tæki</div>
<div class="t" style="left:243px;top:28.84px;font-size:12px;font-weight:normal;color:#000;letter-spacing:-0.072px;font-family:'Liberation Sans', sans-serif;">Hjálp</div>
<div class="t" style="left:17px;top:78.84px;font-size:12px;font-weight:normal;color:#000;letter-spacing:-0.280px;font-family:'Liberation Sans', sans-serif;">Sækja frá dk</div>
<div class="t" style="left:97px;top:78.84px;font-size:12px;font-weight:normal;color:#000;letter-spacing:-0.569px;font-family:'Liberation Sans', sans-serif;">Senda á kassa</div>
<div class="t" style="left:185px;top:78.84px;font-size:12px;font-weight:normal;color:#000;letter-spacing:-0.314px;font-family:'Liberation Sans', sans-serif;">Sækja frá kössum</div>
<div class="t" style="left:293px;top:78.84px;font-size:12px;font-weight:normal;color:#000;letter-spacing:-0.143px;font-family:'Liberation Sans', sans-serif;">Senda til dk</div>
<div class="t" style="left:376px;top:78.84px;font-size:12px;font-weight:normal;color:#000;letter-spacing:-0.147px;font-family:'Liberation Sans', sans-serif;">Endurhlaða val</div>
<div class="t" style="left:470px;top:78.84px;font-size:12px;font-weight:normal;color:#000;letter-spacing:0.106px;font-family:'Liberation Sans', sans-serif;">Gagnaflutningur</div>
<div class="t" style="left:7.5px;top:103.30px;font-size:15px;font-weight:bold;color:#fff;letter-spacing:-0.289px;font-family:'Liberation Sans', sans-serif;">Gögn</div>
<div class="t" style="left:34.5px;top:142.69px;font-size:11px;font-weight:normal;color:#000;letter-spacing:-0.375px;font-family:'Liberation Sans', sans-serif;">Sala dagsins</div>
<div class="t" style="left:34.5px;top:172.69px;font-size:11px;font-weight:normal;color:#000;letter-spacing:-0.783px;font-family:'Liberation Sans', sans-serif;">Sala</div>
<div class="t" style="left:34.5px;top:202.69px;font-size:11px;font-weight:normal;color:#000;letter-spacing:-0.371px;font-family:'Liberation Sans', sans-serif;">Sölugreining</div>
<div class="t" style="left:34.5px;top:232.69px;font-size:11px;font-weight:normal;color:#000;letter-spacing:-0.162px;font-family:'Liberation Sans', sans-serif;">Uppgjör</div>
<div class="t" style="left:34.5px;top:262.69px;font-size:11px;font-weight:normal;color:#000;letter-spacing:-0.357px;font-family:'Liberation Sans', sans-serif;">Birgðir</div>
<div class="t" style="left:34.5px;top:292.69px;font-size:11px;font-weight:normal;color:#000;letter-spacing:-0.202px;font-family:'Liberation Sans', sans-serif;">Skuldunautar</div>
<div class="t" style="left:34.5px;top:322.69px;font-size:11px;font-weight:normal;color:#000;letter-spacing:-0.518px;font-family:'Liberation Sans', sans-serif;">Sölumenn</div>
<div class="t" style="left:34.5px;top:352.69px;font-size:11px;font-weight:normal;color:#000;letter-spacing:-0.060px;font-family:'Liberation Sans', sans-serif;">Innborganir</div>
<div class="t" style="left:34.5px;top:382.69px;font-size:11px;font-weight:normal;color:#000;letter-spacing:-0.053px;font-family:'Liberation Sans', sans-serif;">Þjónustukerfi</div>
<div class="t" style="left:34.5px;top:412.69px;font-size:11px;font-weight:normal;color:#000;letter-spacing:0.083px;font-family:'Liberation Sans', sans-serif;">Gjafabréf</div>
<div class="t" style="left:34.5px;top:442.69px;font-size:11px;font-weight:normal;color:#000;letter-spacing:-0.052px;font-family:'Liberation Sans', sans-serif;">Innleggsnótur</div>
<div class="t" style="left:34.5px;top:472.69px;font-size:11px;font-weight:normal;color:#000;letter-spacing:-0.137px;font-family:'Liberation Sans', sans-serif;">Vildarkort</div>
<div class="t" style="left:34.5px;top:502.69px;font-size:11px;font-weight:normal;color:#000;letter-spacing:-0.126px;font-family:'Liberation Sans', sans-serif;">Vörumóttakendur</div>
<div class="t" style="left:34.5px;top:532.69px;font-size:11px;font-weight:normal;color:#000;letter-spacing:-0.496px;font-family:'Liberation Sans', sans-serif;">Heimalán</div>
<div class="t" style="left:34.5px;top:562.69px;font-size:11px;font-weight:normal;color:#000;letter-spacing:-0.088px;font-family:'Liberation Sans', sans-serif;">Lyfjaávísanir</div>
<div class="t" style="left:34.5px;top:622.69px;font-size:11px;font-weight:normal;color:#000;letter-spacing:-0.037px;font-family:'Liberation Sans', sans-serif;">Skrá út</div>
<div class="t" style="left:35px;top:754.27px;font-size:11.5px;font-weight:bold;color:#000;letter-spacing:-0.358px;font-family:'Liberation Sans', sans-serif;">Gögn</div>
<div class="t" style="left:35px;top:786.27px;font-size:11.5px;font-weight:bold;color:#000;letter-spacing:0.080px;font-family:'Liberation Sans', sans-serif;">Stillingar</div>
<div class="t" style="left:175px;top:117.69px;font-size:11px;font-weight:normal;color:#000;letter-spacing:-0.135px;font-family:'Liberation Sans', sans-serif;">Dags frá</div>
<div class="t" style="left:306.5px;top:117.69px;font-size:11px;font-weight:normal;color:#000;letter-spacing:-0.273px;font-family:'Liberation Sans', sans-serif;">Dags til</div>
<div class="t" style="left:432.5px;top:117.69px;font-size:11px;font-weight:normal;color:#000;letter-spacing:-0.458px;font-family:'Liberation Sans', sans-serif;">Kassar</div>
<div class="t" style="left:224px;top:117.69px;font-size:11px;font-weight:normal;color:#000;letter-spacing:-0.006px;font-family:'Liberation Sans', sans-serif;">01.01.2020</div>
<div class="t" style="left:350px;top:117.69px;font-size:11px;font-weight:normal;color:#000;letter-spacing:-0.006px;font-family:'Liberation Sans', sans-serif;">28.02.2025</div>
<div class="t" style="left:473.5px;top:117.69px;font-size:11px;font-weight:normal;color:#000;letter-spacing:0.027px;font-family:'Liberation Sans', sans-serif;">Allir-1-8-11-12-13-19-21-23-29-30-51-52-61-62-70-71-72</div>
<div class="t" style="left:180.5px;top:163.69px;font-size:11px;font-weight:normal;color:#000;letter-spacing:-0.066px;font-family:'Liberation Sans', sans-serif;">Gefin út</div>
<div class="t" style="left:260.5px;top:163.69px;font-size:11px;font-weight:normal;color:#000;letter-spacing:-0.103px;font-family:'Liberation Sans', sans-serif;">Númer</div>
<div class="t" style="left:340.5px;top:163.69px;font-size:11px;font-weight:normal;color:#000;letter-spacing:0.000px;font-family:'Liberation Sans', sans-serif;">Upphæð</div>
<div class="t" style="left:450.5px;top:163.69px;font-size:11px;font-weight:normal;color:#000;letter-spacing:0.000px;font-family:'Liberation Sans', sans-serif;">Strikamerki</div>
<div class="t" style="left:707.5px;top:163.69px;font-size:11px;font-weight:normal;color:#000;letter-spacing:0.000px;font-family:'Liberation Sans', sans-serif;">Sölumaður</div>
<div class="t" style="left:782.5px;top:163.69px;font-size:11px;font-weight:normal;color:#000;letter-spacing:0.000px;font-family:'Liberation Sans', sans-serif;">Kassi nr.</div>
<div class="t" style="left:852.5px;top:163.69px;font-size:11px;font-weight:normal;color:#000;letter-spacing:0.000px;font-family:'Liberation Sans', sans-serif;">Í gildi</div>
<div class="t" style="left:902.5px;top:163.69px;font-size:11px;font-weight:normal;color:#000;letter-spacing:0.000px;font-family:'Liberation Sans', sans-serif;">Notað dags</div>
<div class="t" style="left:180.5px;top:181.69px;font-size:11px;font-weight:normal;color:#000;letter-spacing:0.000px;font-family:'Liberation Sans', sans-serif;">23.09.2020</div>
<div class="t" style="left:260.5px;top:181.69px;font-size:11px;font-weight:normal;color:#000;letter-spacing:-0.149px;font-family:'Liberation Sans', sans-serif;">10000002</div>
<div class="t" style="left:auto;right:561px;top:181.69px;font-size:11px;font-weight:normal;color:#000;letter-spacing:0.000px;font-family:'Liberation Sans', sans-serif;">400,00</div>
<div class="t" style="left:450.5px;top:181.69px;font-size:11px;font-weight:normal;color:#000;letter-spacing:-0.149px;font-family:'Liberation Sans', sans-serif;">10000002</div>
<div class="t" style="left:707.5px;top:181.69px;font-size:11px;font-weight:normal;color:#000;letter-spacing:0.000px;font-family:'Liberation Sans', sans-serif;">10</div>
<div class="t" style="left:auto;right:158.5px;top:181.69px;font-size:11px;font-weight:normal;color:#000;letter-spacing:0.000px;font-family:'Liberation Sans', sans-serif;">1</div>
<div class="t" style="left:180.5px;top:199.69px;font-size:11px;font-weight:normal;color:#000;letter-spacing:0.000px;font-family:'Liberation Sans', sans-serif;">16.09.2021</div>
<div class="t" style="left:260.5px;top:199.69px;font-size:11px;font-weight:normal;color:#000;letter-spacing:-0.149px;font-family:'Liberation Sans', sans-serif;">10000004</div>
<div class="t" style="left:auto;right:561px;top:199.69px;font-size:11px;font-weight:normal;color:#000;letter-spacing:0.000px;font-family:'Liberation Sans', sans-serif;">9.600,00</div>
<div class="t" style="left:450.5px;top:199.69px;font-size:11px;font-weight:normal;color:#000;letter-spacing:-0.149px;font-family:'Liberation Sans', sans-serif;">10000004</div>
<div class="t" style="left:707.5px;top:199.69px;font-size:11px;font-weight:normal;color:#000;letter-spacing:0.000px;font-family:'Liberation Sans', sans-serif;">10</div>
<div class="t" style="left:auto;right:158.5px;top:199.69px;font-size:11px;font-weight:normal;color:#000;letter-spacing:0.000px;font-family:'Liberation Sans', sans-serif;">1</div>
<div class="t" style="left:180.5px;top:217.69px;font-size:11px;font-weight:normal;color:#000;letter-spacing:0.000px;font-family:'Liberation Sans', sans-serif;">12.12.2024</div>
<div class="t" style="left:260.5px;top:217.69px;font-size:11px;font-weight:normal;color:#000;letter-spacing:-0.148px;font-family:'Liberation Sans', sans-serif;">120000001</div>
<div class="t" style="left:auto;right:561px;top:217.69px;font-size:11px;font-weight:normal;color:#000;letter-spacing:0.000px;font-family:'Liberation Sans', sans-serif;">600,00</div>
<div class="t" style="left:450.5px;top:217.69px;font-size:11px;font-weight:normal;color:#000;letter-spacing:-0.148px;font-family:'Liberation Sans', sans-serif;">120000001</div>
<div class="t" style="left:707.5px;top:217.69px;font-size:11px;font-weight:normal;color:#000;letter-spacing:0.000px;font-family:'Liberation Sans', sans-serif;">12</div>
<div class="t" style="left:auto;right:158.5px;top:217.69px;font-size:11px;font-weight:normal;color:#000;letter-spacing:0.000px;font-family:'Liberation Sans', sans-serif;">12</div>
<div class="t" style="left:180.5px;top:235.69px;font-size:11px;font-weight:normal;color:#000;letter-spacing:0.000px;font-family:'Liberation Sans', sans-serif;">12.12.2024</div>
<div class="t" style="left:260.5px;top:235.69px;font-size:11px;font-weight:normal;color:#000;letter-spacing:-0.148px;font-family:'Liberation Sans', sans-serif;">120000003</div>
<div class="t" style="left:auto;right:561px;top:235.69px;font-size:11px;font-weight:normal;color:#000;letter-spacing:0.000px;font-family:'Liberation Sans', sans-serif;">3.300,00</div>
<div class="t" style="left:450.5px;top:235.69px;font-size:11px;font-weight:normal;color:#000;letter-spacing:-0.148px;font-family:'Liberation Sans', sans-serif;">120000003</div>
<div class="t" style="left:707.5px;top:235.69px;font-size:11px;font-weight:normal;color:#000;letter-spacing:0.000px;font-family:'Liberation Sans', sans-serif;">12</div>
<div class="t" style="left:auto;right:158.5px;top:235.69px;font-size:11px;font-weight:normal;color:#000;letter-spacing:0.000px;font-family:'Liberation Sans', sans-serif;">12</div>
<div class="t" style="left:180.5px;top:253.69px;font-size:11px;font-weight:normal;color:#000;letter-spacing:0.000px;font-family:'Liberation Sans', sans-serif;">29.11.2023</div>
<div class="t" style="left:260.5px;top:253.69px;font-size:11px;font-weight:normal;color:#000;letter-spacing:-0.148px;font-family:'Liberation Sans', sans-serif;">210000001</div>
<div class="t" style="left:auto;right:561px;top:253.69px;font-size:11px;font-weight:normal;color:#000;letter-spacing:0.000px;font-family:'Liberation Sans', sans-serif;">400,00</div>
<div class="t" style="left:450.5px;top:253.69px;font-size:11px;font-weight:normal;color:#000;letter-spacing:-0.148px;font-family:'Liberation Sans', sans-serif;">210000001</div>
<div class="t" style="left:707.5px;top:253.69px;font-size:11px;font-weight:normal;color:#000;letter-spacing:0.000px;font-family:'Liberation Sans', sans-serif;">99</div>
<div class="t" style="left:auto;right:158.5px;top:253.69px;font-size:11px;font-weight:normal;color:#000;letter-spacing:0.000px;font-family:'Liberation Sans', sans-serif;">21</div>
<div class="t" style="left:180.5px;top:271.69px;font-size:11px;font-weight:normal;color:#000;letter-spacing:0.000px;font-family:'Liberation Sans', sans-serif;">11.03.2021</div>
<div class="t" style="left:260.5px;top:271.69px;font-size:11px;font-weight:normal;color:#000;letter-spacing:-0.148px;font-family:'Liberation Sans', sans-serif;">610000001</div>
<div class="t" style="left:auto;right:561px;top:271.69px;font-size:11px;font-weight:normal;color:#000;letter-spacing:0.000px;font-family:'Liberation Sans', sans-serif;">350,00</div>
<div class="t" style="left:450.5px;top:271.69px;font-size:11px;font-weight:normal;color:#000;letter-spacing:-0.148px;font-family:'Liberation Sans', sans-serif;">610000001</div>
<div class="t" style="left:707.5px;top:271.69px;font-size:11px;font-weight:normal;color:#000;letter-spacing:0.000px;font-family:'Liberation Sans', sans-serif;">11</div>
<div class="t" style="left:auto;right:158.5px;top:271.69px;font-size:11px;font-weight:normal;color:#000;letter-spacing:0.000px;font-family:'Liberation Sans', sans-serif;">61</div>
<div class="t" style="left:180.5px;top:289.69px;font-size:11px;font-weight:normal;color:#000;letter-spacing:0.000px;font-family:'Liberation Sans', sans-serif;">25.01.2022</div>
<div class="t" style="left:260.5px;top:289.69px;font-size:11px;font-weight:normal;color:#000;letter-spacing:-0.148px;font-family:'Liberation Sans', sans-serif;">610000002</div>
<div class="t" style="left:auto;right:561px;top:289.69px;font-size:11px;font-weight:normal;color:#000;letter-spacing:0.000px;font-family:'Liberation Sans', sans-serif;">45.000,00</div>
<div class="t" style="left:450.5px;top:289.69px;font-size:11px;font-weight:normal;color:#000;letter-spacing:-0.148px;font-family:'Liberation Sans', sans-serif;">610000002</div>
<div class="t" style="left:707.5px;top:289.69px;font-size:11px;font-weight:normal;color:#000;letter-spacing:0.000px;font-family:'Liberation Sans', sans-serif;">99</div>
<div class="t" style="left:auto;right:158.5px;top:289.69px;font-size:11px;font-weight:normal;color:#000;letter-spacing:0.000px;font-family:'Liberation Sans', sans-serif;">61</div>
<div class="t" style="left:180.5px;top:307.69px;font-size:11px;font-weight:normal;color:#000;letter-spacing:0.000px;font-family:'Liberation Sans', sans-serif;">09.12.2024</div>
<div class="t" style="left:260.5px;top:307.69px;font-size:11px;font-weight:normal;color:#000;letter-spacing:-0.148px;font-family:'Liberation Sans', sans-serif;">610000003</div>
<div class="t" style="left:auto;right:561px;top:307.69px;font-size:11px;font-weight:normal;color:#000;letter-spacing:0.000px;font-family:'Liberation Sans', sans-serif;">100,00</div>
<div class="t" style="left:450.5px;top:307.69px;font-size:11px;font-weight:normal;color:#000;letter-spacing:-0.148px;font-family:'Liberation Sans', sans-serif;">610000003</div>
<div class="t" style="left:707.5px;top:307.69px;font-size:11px;font-weight:normal;color:#000;letter-spacing:0.000px;font-family:'Liberation Sans', sans-serif;">18</div>
<div class="t" style="left:auto;right:158.5px;top:307.69px;font-size:11px;font-weight:normal;color:#000;letter-spacing:0.000px;font-family:'Liberation Sans', sans-serif;">61</div>
<div class="t" style="left:180.5px;top:325.69px;font-size:11px;font-weight:normal;color:#000;letter-spacing:0.000px;font-family:'Liberation Sans', sans-serif;">09.12.2024</div>
<div class="t" style="left:260.5px;top:325.69px;font-size:11px;font-weight:normal;color:#000;letter-spacing:-0.148px;font-family:'Liberation Sans', sans-serif;">610000004</div>
<div class="t" style="left:auto;right:561px;top:325.69px;font-size:11px;font-weight:normal;color:#000;letter-spacing:0.000px;font-family:'Liberation Sans', sans-serif;">10.980,00</div>
<div class="t" style="left:450.5px;top:325.69px;font-size:11px;font-weight:normal;color:#000;letter-spacing:-0.148px;font-family:'Liberation Sans', sans-serif;">610000004</div>
<div class="t" style="left:707.5px;top:325.69px;font-size:11px;font-weight:normal;color:#000;letter-spacing:0.000px;font-family:'Liberation Sans', sans-serif;">18</div>
<div class="t" style="left:auto;right:158.5px;top:325.69px;font-size:11px;font-weight:normal;color:#000;letter-spacing:0.000px;font-family:'Liberation Sans', sans-serif;">61</div>
<div class="t" style="left:180.5px;top:343.69px;font-size:11px;font-weight:normal;color:#000;letter-spacing:0.000px;font-family:'Liberation Sans', sans-serif;">14.01.2025</div>
<div class="t" style="left:260.5px;top:343.69px;font-size:11px;font-weight:normal;color:#000;letter-spacing:-0.148px;font-family:'Liberation Sans', sans-serif;">700000001</div>
<div class="t" style="left:auto;right:561px;top:343.69px;font-size:11px;font-weight:normal;color:#000;letter-spacing:0.000px;font-family:'Liberation Sans', sans-serif;">2.500,00</div>
<div class="t" style="left:450.5px;top:343.69px;font-size:11px;font-weight:normal;color:#000;letter-spacing:-0.148px;font-family:'Liberation Sans', sans-serif;">700000001</div>
<div class="t" style="left:707.5px;top:343.69px;font-size:11px;font-weight:normal;color:#000;letter-spacing:0.000px;font-family:'Liberation Sans', sans-serif;">99</div>
<div class="t" style="left:auto;right:158.5px;top:343.69px;font-size:11px;font-weight:normal;color:#000;letter-spacing:0.000px;font-family:'Liberation Sans', sans-serif;">70</div>
<div class="t" style="left:180.5px;top:361.69px;font-size:11px;font-weight:normal;color:#000;letter-spacing:0.000px;font-family:'Liberation Sans', sans-serif;">14.01.2025</div>
<div class="t" style="left:260.5px;top:361.69px;font-size:11px;font-weight:normal;color:#000;letter-spacing:-0.148px;font-family:'Liberation Sans', sans-serif;">700000002</div>
<div class="t" style="left:auto;right:561px;top:361.69px;font-size:11px;font-weight:normal;color:#000;letter-spacing:0.000px;font-family:'Liberation Sans', sans-serif;">12.500,00</div>
<div class="t" style="left:450.5px;top:361.69px;font-size:11px;font-weight:normal;color:#000;letter-spacing:-0.148px;font-family:'Liberation Sans', sans-serif;">700000002</div>
<div class="t" style="left:707.5px;top:361.69px;font-size:11px;font-weight:normal;color:#000;letter-spacing:0.000px;font-family:'Liberation Sans', sans-serif;">99</div>
<div class="t" style="left:auto;right:158.5px;top:361.69px;font-size:11px;font-weight:normal;color:#000;letter-spacing:0.000px;font-family:'Liberation Sans', sans-serif;">70</div>
<div class="t" style="left:180.5px;top:379.69px;font-size:11px;font-weight:normal;color:#000;letter-spacing:0.000px;font-family:'Liberation Sans', sans-serif;">14.01.2025</div>
<div class="t" style="left:260.5px;top:379.69px;font-size:11px;font-weight:normal;color:#000;letter-spacing:-0.148px;font-family:'Liberation Sans', sans-serif;">700000003</div>
<div class="t" style="left:auto;right:561px;top:379.69px;font-size:11px;font-weight:normal;color:#000;letter-spacing:0.000px;font-family:'Liberation Sans', sans-serif;">1.000,00</div>
<div class="t" style="left:450.5px;top:379.69px;font-size:11px;font-weight:normal;color:#000;letter-spacing:-0.148px;font-family:'Liberation Sans', sans-serif;">700000003</div>
<div class="t" style="left:707.5px;top:379.69px;font-size:11px;font-weight:normal;color:#000;letter-spacing:0.000px;font-family:'Liberation Sans', sans-serif;">99</div>
<div class="t" style="left:auto;right:158.5px;top:379.69px;font-size:11px;font-weight:normal;color:#000;letter-spacing:0.000px;font-family:'Liberation Sans', sans-serif;">70</div>
<div class="t" style="left:180.5px;top:397.69px;font-size:11px;font-weight:normal;color:#000;letter-spacing:0.000px;font-family:'Liberation Sans', sans-serif;">14.01.2025</div>
<div class="t" style="left:260.5px;top:397.69px;font-size:11px;font-weight:normal;color:#000;letter-spacing:-0.148px;font-family:'Liberation Sans', sans-serif;">700000004</div>
<div class="t" style="left:auto;right:561px;top:397.69px;font-size:11px;font-weight:normal;color:#000;letter-spacing:0.000px;font-family:'Liberation Sans', sans-serif;">7.500,00</div>
<div class="t" style="left:450.5px;top:397.69px;font-size:11px;font-weight:normal;color:#000;letter-spacing:-0.148px;font-family:'Liberation Sans', sans-serif;">700000004</div>
<div class="t" style="left:707.5px;top:397.69px;font-size:11px;font-weight:normal;color:#000;letter-spacing:0.000px;font-family:'Liberation Sans', sans-serif;">99</div>
<div class="t" style="left:auto;right:158.5px;top:397.69px;font-size:11px;font-weight:normal;color:#000;letter-spacing:0.000px;font-family:'Liberation Sans', sans-serif;">70</div>
<div class="t" style="left:180.5px;top:415.69px;font-size:11px;font-weight:normal;color:#000;letter-spacing:0.000px;font-family:'Liberation Sans', sans-serif;">14.01.2025</div>
<div class="t" style="left:260.5px;top:415.69px;font-size:11px;font-weight:normal;color:#000;letter-spacing:-0.148px;font-family:'Liberation Sans', sans-serif;">700000006</div>
<div class="t" style="left:auto;right:561px;top:415.69px;font-size:11px;font-weight:normal;color:#000;letter-spacing:0.000px;font-family:'Liberation Sans', sans-serif;">1.900,00</div>
<div class="t" style="left:450.5px;top:415.69px;font-size:11px;font-weight:normal;color:#000;letter-spacing:-0.148px;font-family:'Liberation Sans', sans-serif;">700000006</div>
<div class="t" style="left:707.5px;top:415.69px;font-size:11px;font-weight:normal;color:#000;letter-spacing:0.000px;font-family:'Liberation Sans', sans-serif;">99</div>
<div class="t" style="left:auto;right:158.5px;top:415.69px;font-size:11px;font-weight:normal;color:#000;letter-spacing:0.000px;font-family:'Liberation Sans', sans-serif;">70</div>
<div class="t" style="left:180.5px;top:433.69px;font-size:11px;font-weight:normal;color:#000;letter-spacing:0.000px;font-family:'Liberation Sans', sans-serif;">14.01.2025</div>
<div class="t" style="left:260.5px;top:433.69px;font-size:11px;font-weight:normal;color:#000;letter-spacing:-0.148px;font-family:'Liberation Sans', sans-serif;">700000009</div>
<div class="t" style="left:auto;right:561px;top:433.69px;font-size:11px;font-weight:normal;color:#000;letter-spacing:0.000px;font-family:'Liberation Sans', sans-serif;">100,00</div>
<div class="t" style="left:450.5px;top:433.69px;font-size:11px;font-weight:normal;color:#000;letter-spacing:-0.148px;font-family:'Liberation Sans', sans-serif;">700000009</div>
<div class="t" style="left:707.5px;top:433.69px;font-size:11px;font-weight:normal;color:#000;letter-spacing:0.000px;font-family:'Liberation Sans', sans-serif;">99</div>
<div class="t" style="left:auto;right:158.5px;top:433.69px;font-size:11px;font-weight:normal;color:#000;letter-spacing:0.000px;font-family:'Liberation Sans', sans-serif;">70</div>
<div class="t" style="left:180.5px;top:451.69px;font-size:11px;font-weight:normal;color:#000;letter-spacing:0.000px;font-family:'Liberation Sans', sans-serif;">10.08.2022</div>
<div class="t" style="left:260.5px;top:451.69px;font-size:11px;font-weight:normal;color:#000;letter-spacing:-0.148px;font-family:'Liberation Sans', sans-serif;">710000003</div>
<div class="t" style="left:auto;right:561px;top:451.69px;font-size:11px;font-weight:normal;color:#000;letter-spacing:0.000px;font-family:'Liberation Sans', sans-serif;">12.500,00</div>
<div class="t" style="left:450.5px;top:451.69px;font-size:11px;font-weight:normal;color:#000;letter-spacing:-0.148px;font-family:'Liberation Sans', sans-serif;">710000003</div>
<div class="t" style="left:707.5px;top:451.69px;font-size:11px;font-weight:normal;color:#000;letter-spacing:0.000px;font-family:'Liberation Sans', sans-serif;">99</div>
<div class="t" style="left:auto;right:158.5px;top:451.69px;font-size:11px;font-weight:normal;color:#000;letter-spacing:0.000px;font-family:'Liberation Sans', sans-serif;">71</div>
<div class="t" style="left:180.5px;top:469.69px;font-size:11px;font-weight:normal;color:#000;letter-spacing:0.000px;font-family:'Liberation Sans', sans-serif;">21.01.2025</div>
<div class="t" style="left:260.5px;top:469.69px;font-size:11px;font-weight:normal;color:#000;letter-spacing:-0.148px;font-family:'Liberation Sans', sans-serif;">720000001</div>
<div class="t" style="left:auto;right:561px;top:469.69px;font-size:11px;font-weight:normal;color:#000;letter-spacing:0.000px;font-family:'Liberation Sans', sans-serif;">15.500,00</div>
<div class="t" style="left:450.5px;top:469.69px;font-size:11px;font-weight:normal;color:#000;letter-spacing:-0.148px;font-family:'Liberation Sans', sans-serif;">720000001</div>
<div class="t" style="left:707.5px;top:469.69px;font-size:11px;font-weight:normal;color:#000;letter-spacing:0.000px;font-family:'Liberation Sans', sans-serif;">99</div>
<div class="t" style="left:auto;right:158.5px;top:469.69px;font-size:11px;font-weight:normal;color:#000;letter-spacing:0.000px;font-family:'Liberation Sans', sans-serif;">72</div>
<div class="t" style="left:180.5px;top:487.69px;font-size:11px;font-weight:normal;color:#f0f0f0;letter-spacing:0.000px;font-family:'Liberation Sans', sans-serif;">21.01.2025</div>
<div class="t" style="left:260.5px;top:487.69px;font-size:11px;font-weight:normal;color:#f0f0f0;letter-spacing:-0.148px;font-family:'Liberation Sans', sans-serif;">720000002</div>
<div class="t" style="left:auto;right:561px;top:487.69px;font-size:11px;font-weight:normal;color:#f0f0f0;letter-spacing:0.000px;font-family:'Liberation Sans', sans-serif;">12.500,00</div>
<div class="t" style="left:450.5px;top:487.69px;font-size:11px;font-weight:normal;color:#f0f0f0;letter-spacing:-0.148px;font-family:'Liberation Sans', sans-serif;">720000002</div>
<div class="t" style="left:707.5px;top:487.69px;font-size:11px;font-weight:normal;color:#f0f0f0;letter-spacing:0.000px;font-family:'Liberation Sans', sans-serif;">99</div>
<div class="t" style="left:auto;right:158.5px;top:487.69px;font-size:11px;font-weight:normal;color:#f0f0f0;letter-spacing:0.000px;font-family:'Liberation Sans', sans-serif;">72</div>
<div class="t" style="left:auto;right:562px;top:786.69px;font-size:11px;font-weight:normal;color:#000;letter-spacing:0.000px;font-family:'Liberation Sans', sans-serif;">136.730,00</div>
<div class="t" style="left:172px;top:818.98px;font-size:12px;font-weight:bold;color:#000;letter-spacing:-0.822px;font-family:'Liberation Serif', serif;-webkit-text-stroke:0;">F5</div>
<div class="t" style="left:191.5px;top:819.69px;font-size:11px;font-weight:normal;color:#000;letter-spacing:-0.355px;font-family:'Liberation Sans', sans-serif;">Valmynd</div>
<div class="t" style="left:254.5px;top:818.98px;font-size:12px;font-weight:bold;color:#000;letter-spacing:-0.672px;font-family:'Liberation Serif', serif;-webkit-text-stroke:0;">F6</div>
<div class="t" style="left:274.5px;top:819.69px;font-size:11px;font-weight:normal;color:#000;letter-spacing:-0.307px;font-family:'Liberation Sans', sans-serif;">Skilyrði</div>
<div class="t" style="left:341px;top:818.98px;font-size:12px;font-weight:bold;color:#000;letter-spacing:-0.763px;font-family:'Liberation Serif', serif;-webkit-text-stroke:0;">ENT</div>
<div class="t" style="left:369px;top:819.69px;font-size:11px;font-weight:normal;color:#000;letter-spacing:0.034px;font-family:'Liberation Sans', sans-serif;">Breyta</div>
<div style="left:219px;top:117px;width:64px;height:12px;background:#ffe600;mix-blend-mode:darken"></div>
<div style="left:346px;top:116px;width:63px;height:12px;background:#ffe600;mix-blend-mode:darken"></div>
<div style="left:471px;top:117px;width:76px;height:13px;background:#ffe600;mix-blend-mode:darken"></div>
<div style="left:782px;top:164px;width:67px;height:12px;background:#ffe600;mix-blend-mode:darken"></div>
<div style="left:851px;top:164px;width:48px;height:12px;background:#ffe600;mix-blend-mode:darken"></div>
<div style="left:899px;top:164px;width:67px;height:12px;background:#ffe600;mix-blend-mode:darken"></div>
<div style="left:243px;top:821px;width:68px;height:12px;background:#ffe600;mix-blend-mode:darken"></div>
<div style="left:1px;top:755px;width:174px;height:12px;background:#ffe600;mix-blend-mode:darken"></div>
<div style="left:7px;top:448px;width:107px;height:12px;background:#ffff00;mix-blend-mode:darken"></div>
</body></html>
